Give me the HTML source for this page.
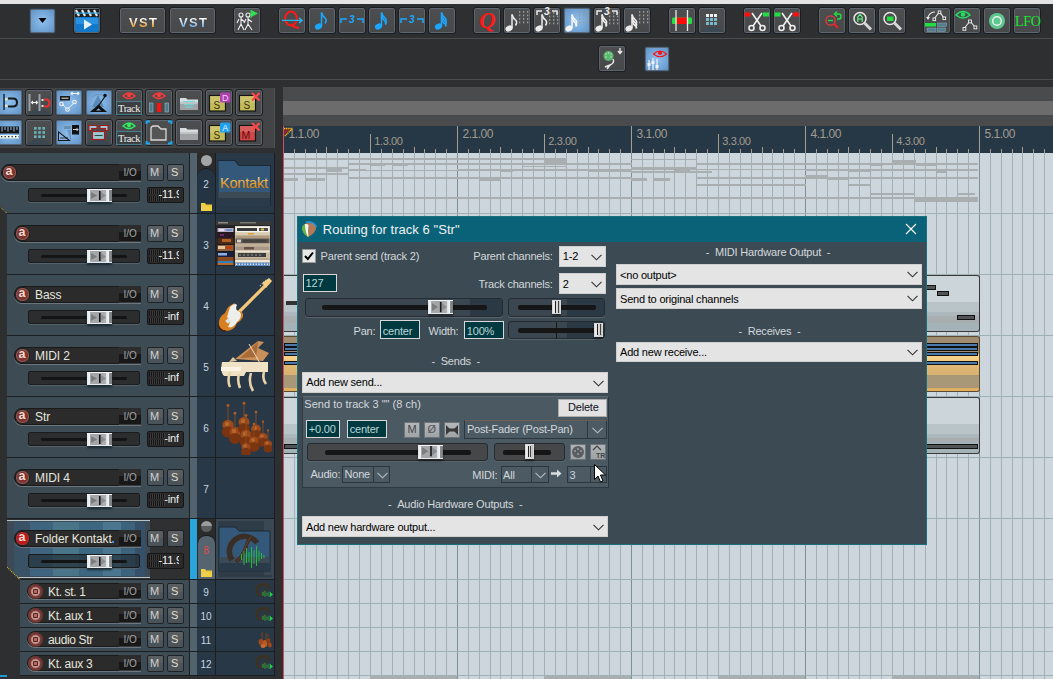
<!DOCTYPE html><html><head><meta charset="utf-8"><style>
*{box-sizing:border-box;margin:0;padding:0}
html,body{width:1053px;height:679px;overflow:hidden;background:#2e2f31;font-family:"Liberation Sans",sans-serif;position:relative}
div,span,svg{position:absolute}
.tb{width:28px;height:27px;border-radius:3px;background:linear-gradient(#4d4e50,#47484a);border:1px solid #1c1d1f;box-shadow:inset 0 0 0 1px #5d6670}
.tb.on{background:radial-gradient(circle at 50% 50%,#8fc0ee 0,#78aadb 45%,#5d8fc0 100%);border-color:#2a3a4a}
.tbs{width:27px;height:27px;border-radius:3px;background:linear-gradient(#4d4e50,#47484a);border:1px solid #1c1d1f;box-shadow:inset 0 0 0 1px #5d6670}
.tbs.on{background:radial-gradient(circle at 50% 50%,#8fc0ee 0,#78aadb 45%,#5d8fc0 100%);border-color:#2a3a4a}
.t{white-space:nowrap;line-height:1}
</style></head><body>
<div style="left:0;top:0;width:1053px;height:4px;background:#e4e4e4"></div>
<div style="left:0;top:38px;width:1053px;height:1px;background:#4a4b4d"></div>
<div style="left:0;top:79px;width:1053px;height:1px;background:#4a4b4d"></div>
<div class="tb on" style="left:29px;top:8px;width:27px;height:26px"></div>
<svg style="left:29px;top:8px" width="27" height="26" viewBox="0 0 27 26"><path d="M9.5 10 H17.5 L13.5 15Z" fill="#000"/></svg>
<div class="tb" style="left:73px;top:7px;width:28px;height:27px"></div>
<svg style="left:73px;top:7px" width="28" height="27" viewBox="0 0 28 27"><rect x="2" y="2" width="24" height="8" fill="#202020"/><path d="M3 3 l3 6 M9 3 l3 6 M15 3 l3 6 M21 3 l3 6" stroke="#e8e8e8" stroke-width="2.2"/><rect x="2" y="5.5" width="24" height="1.2" fill="#3ab0f0"/><rect x="2" y="10" width="24" height="15" rx="2" fill="#1478c8"/><rect x="3" y="11" width="22" height="6" fill="#2a90e0"/><path d="M11 12.5 L19 17.5 L11 22.5Z" fill="#e6f2fa"/></svg>
<div class="tb" style="left:119px;top:7px;width:47px;height:27px"></div>
<span class="t" style="left:129px;top:16px;font-size:13px;font-weight:bold;letter-spacing:1.3px;background:linear-gradient(#ffffff 20%,#e8a040 80%);-webkit-background-clip:text;color:transparent">VST</span>
<div class="tb" style="left:169px;top:7px;width:47px;height:27px"></div>
<span class="t" style="left:179px;top:16px;font-size:13px;font-weight:bold;letter-spacing:1.3px;background:linear-gradient(#ffffff 20%,#78b0e0 80%);-webkit-background-clip:text;color:transparent">VST</span>
<div class="tb" style="left:233px;top:7px;width:28px;height:27px"></div>
<svg style="left:233px;top:7px" width="28" height="27" viewBox="0 0 28 27"><g fill="none" stroke="#f0f0f0" stroke-width="1.1"><circle cx="8" cy="8" r="2"/><circle cx="15" cy="8" r="2"/><path d="M8 10 V17 L5 23 M8 17 L11 23 M6 12 L4 16 M8 12 L12 15 M15 10 V17 L12 23 M15 17 L19 23 M15 12 L19 15 M13 12 L11 16"/></g><path d="M18 3 L25 6.5 L18 10Z" fill="#30e050"/><path d="M18 3 V11" stroke="#30e050" stroke-width="1"/></svg>
<div class="tb" style="left:278px;top:7px"></div>
<div class="tb" style="left:308px;top:7px"></div>
<div class="tb" style="left:338px;top:7px"></div>
<div class="tb" style="left:368px;top:7px"></div>
<div class="tb" style="left:398px;top:7px"></div>
<div class="tb" style="left:428px;top:7px"></div>
<svg style="left:278px;top:7px" width="28" height="27" viewBox="0 0 28 27"><ellipse cx="13" cy="11.5" rx="5.8" ry="7" fill="none" stroke="#ff1818" stroke-width="2"/><path d="M13 17 Q17 21 21 21" fill="none" stroke="#ff1818" stroke-width="2.2"/><path d="M4 13.4 H24 M21 11 L24 13.4 L21 16" fill="none" stroke="#20b8f0" stroke-width="1.4"/></svg>
<svg style="left:308px;top:7px" width="28" height="27" viewBox="0 0 28 27"><ellipse cx="10.5" cy="19.5" rx="3.7" ry="2.8" transform="rotate(-25 10.5 19.5)" fill="#1aa8ff"/><path d="M13.5 19.0 V5.5" stroke="#1aa8ff" stroke-width="1.5"/><path d="M13.5 5.5 Q14.5 9.5 17.5 11.5 Q19.0 13.5 17.0 16.5" fill="none" stroke="#1aa8ff" stroke-width="1.5"/></svg>
<svg style="left:338px;top:7px" width="28" height="27" viewBox="0 0 28 27"><path d="M3 16 V12 H9 M19 12 H25 V16" fill="none" stroke="#1aa8ff" stroke-width="1.5"/><text x="11" y="16" font-family="Liberation Sans" font-weight="bold" font-style="italic" font-size="10" fill="#1aa8ff">3</text></svg>
<svg style="left:368px;top:7px" width="28" height="27" viewBox="0 0 28 27"><ellipse cx="10.5" cy="19.5" rx="3.7" ry="2.8" transform="rotate(-25 10.5 19.5)" fill="#1aa8ff"/><path d="M13.5 19.0 V5.5" stroke="#1aa8ff" stroke-width="1.5"/><path d="M13.5 5.5 Q14.5 9.5 17.5 11.5 Q19.0 13.5 17.0 16.5" fill="none" stroke="#1aa8ff" stroke-width="1.5"/><path d="M13.5 8.5 Q14.5 12.5 17.5 14.5 Q19.0 16.5 17.0 17.5" fill="none" stroke="#1aa8ff" stroke-width="1.5"/></svg>
<svg style="left:398px;top:7px" width="28" height="27" viewBox="0 0 28 27"><path d="M3 16 V12 H9 M19 12 H25 V16" fill="none" stroke="#1aa8ff" stroke-width="1.5"/><text x="11" y="16" font-family="Liberation Sans" font-weight="bold" font-style="italic" font-size="10" fill="#1aa8ff">3</text></svg>
<svg style="left:428px;top:7px" width="28" height="27" viewBox="0 0 28 27"><ellipse cx="10.5" cy="19.5" rx="3.7" ry="2.8" transform="rotate(-25 10.5 19.5)" fill="#1aa8ff"/><path d="M13.5 19.0 V5.5" stroke="#1aa8ff" stroke-width="1.5"/><path d="M13.5 5.5 Q14.5 9.5 17.5 11.5 Q19.0 13.5 17.0 16.5" fill="none" stroke="#1aa8ff" stroke-width="1.5"/><path d="M13.5 8.5 Q14.5 12.5 17.5 14.5 Q19.0 16.5 17.0 17.5" fill="none" stroke="#1aa8ff" stroke-width="1.5"/><path d="M13.5 11.5 Q14.5 15.5 17.5 17.5 Q19.0 19.5 17.0 18.5" fill="none" stroke="#1aa8ff" stroke-width="1.5"/></svg>
<div class="tb" style="left:473px;top:7px"></div>
<div class="tb" style="left:503px;top:7px"></div>
<div class="tb" style="left:533px;top:7px"></div>
<div class="tb on" style="left:563px;top:7px"></div>
<div class="tb" style="left:593px;top:7px"></div>
<div class="tb" style="left:623px;top:7px"></div>
<span class="t" style="left:479px;top:9px;font-family:'Liberation Serif';font-size:23px;font-weight:bold;font-style:italic;color:#ff1a1a">Q</span>
<svg style="left:503px;top:7px" width="28" height="27" viewBox="0 0 28 27"><ellipse cx="6" cy="21.5" rx="3.7" ry="2.8" transform="rotate(-25 6 21.5)" fill="#ececec"/><path d="M9 21.0 V7.5" stroke="#ececec" stroke-width="1.5"/><path d="M9 7.5 Q10 11.5 13 13.5 Q14.5 15.5 12.5 18.5" fill="none" stroke="#ececec" stroke-width="1.5"/><rect x="16" y="4.0" width="1.3" height="1.8" fill="#9a9a9a"/><rect x="16" y="7.5" width="1.3" height="1.8" fill="#9a9a9a"/><rect x="16" y="11.0" width="1.3" height="1.8" fill="#9a9a9a"/><rect x="16" y="14.5" width="1.3" height="1.8" fill="#9a9a9a"/><rect x="20" y="4.0" width="1.3" height="1.8" fill="#9a9a9a"/><rect x="20" y="7.5" width="1.3" height="1.8" fill="#9a9a9a"/><rect x="20" y="11.0" width="1.3" height="1.8" fill="#9a9a9a"/><rect x="20" y="14.5" width="1.3" height="1.8" fill="#9a9a9a"/><rect x="24" y="4.0" width="1.3" height="1.8" fill="#9a9a9a"/><rect x="24" y="7.5" width="1.3" height="1.8" fill="#9a9a9a"/><rect x="24" y="11.0" width="1.3" height="1.8" fill="#9a9a9a"/><rect x="24" y="14.5" width="1.3" height="1.8" fill="#9a9a9a"/></svg>
<svg style="left:533px;top:7px" width="28" height="27" viewBox="0 0 28 27"><ellipse cx="6" cy="21.5" rx="3.7" ry="2.8" transform="rotate(-25 6 21.5)" fill="#ececec"/><path d="M9 21.0 V7.5" stroke="#ececec" stroke-width="1.5"/><path d="M9 7.5 Q10 11.5 13 13.5 Q14.5 15.5 12.5 18.5" fill="none" stroke="#ececec" stroke-width="1.5"/><rect x="16" y="5.0" width="1.3" height="1.8" fill="#9a9a9a"/><rect x="16" y="8.5" width="1.3" height="1.8" fill="#9a9a9a"/><rect x="16" y="12.0" width="1.3" height="1.8" fill="#9a9a9a"/><rect x="16" y="15.5" width="1.3" height="1.8" fill="#9a9a9a"/><rect x="20" y="5.0" width="1.3" height="1.8" fill="#9a9a9a"/><rect x="20" y="8.5" width="1.3" height="1.8" fill="#9a9a9a"/><rect x="20" y="12.0" width="1.3" height="1.8" fill="#9a9a9a"/><rect x="20" y="15.5" width="1.3" height="1.8" fill="#9a9a9a"/><rect x="24" y="5.0" width="1.3" height="1.8" fill="#9a9a9a"/><rect x="24" y="8.5" width="1.3" height="1.8" fill="#9a9a9a"/><rect x="24" y="12.0" width="1.3" height="1.8" fill="#9a9a9a"/><rect x="24" y="15.5" width="1.3" height="1.8" fill="#9a9a9a"/><path d="M4 8 V4 H9 M19 4 H24 V8" fill="none" stroke="#ececec" stroke-width="1.5"/><text x="11" y="8" font-family="Liberation Sans" font-weight="bold" font-style="italic" font-size="10" fill="#ececec">3</text></svg>
<svg style="left:563px;top:7px" width="28" height="27" viewBox="0 0 28 27"><ellipse cx="6" cy="21.5" rx="3.7" ry="2.8" transform="rotate(-25 6 21.5)" fill="#f4f4f4"/><path d="M9 21.0 V7.5" stroke="#f4f4f4" stroke-width="1.5"/><path d="M9 7.5 Q10 11.5 13 13.5 Q14.5 15.5 12.5 18.5" fill="none" stroke="#f4f4f4" stroke-width="1.5"/><path d="M9 10.5 Q10 14.5 13 16.5 Q14.5 18.5 12.5 19.5" fill="none" stroke="#f4f4f4" stroke-width="1.5"/><rect x="16" y="4.0" width="1.3" height="1.8" fill="#9a9a9a"/><rect x="16" y="7.5" width="1.3" height="1.8" fill="#9a9a9a"/><rect x="16" y="11.0" width="1.3" height="1.8" fill="#9a9a9a"/><rect x="16" y="14.5" width="1.3" height="1.8" fill="#9a9a9a"/><rect x="20" y="4.0" width="1.3" height="1.8" fill="#9a9a9a"/><rect x="20" y="7.5" width="1.3" height="1.8" fill="#9a9a9a"/><rect x="20" y="11.0" width="1.3" height="1.8" fill="#9a9a9a"/><rect x="20" y="14.5" width="1.3" height="1.8" fill="#9a9a9a"/><rect x="24" y="4.0" width="1.3" height="1.8" fill="#9a9a9a"/><rect x="24" y="7.5" width="1.3" height="1.8" fill="#9a9a9a"/><rect x="24" y="11.0" width="1.3" height="1.8" fill="#9a9a9a"/><rect x="24" y="14.5" width="1.3" height="1.8" fill="#9a9a9a"/></svg>
<svg style="left:593px;top:7px" width="28" height="27" viewBox="0 0 28 27"><ellipse cx="6" cy="21.5" rx="3.7" ry="2.8" transform="rotate(-25 6 21.5)" fill="#ececec"/><path d="M9 21.0 V7.5" stroke="#ececec" stroke-width="1.5"/><path d="M9 7.5 Q10 11.5 13 13.5 Q14.5 15.5 12.5 18.5" fill="none" stroke="#ececec" stroke-width="1.5"/><path d="M9 10.5 Q10 14.5 13 16.5 Q14.5 18.5 12.5 19.5" fill="none" stroke="#ececec" stroke-width="1.5"/><rect x="16" y="5.0" width="1.3" height="1.8" fill="#9a9a9a"/><rect x="16" y="8.5" width="1.3" height="1.8" fill="#9a9a9a"/><rect x="16" y="12.0" width="1.3" height="1.8" fill="#9a9a9a"/><rect x="16" y="15.5" width="1.3" height="1.8" fill="#9a9a9a"/><rect x="20" y="5.0" width="1.3" height="1.8" fill="#9a9a9a"/><rect x="20" y="8.5" width="1.3" height="1.8" fill="#9a9a9a"/><rect x="20" y="12.0" width="1.3" height="1.8" fill="#9a9a9a"/><rect x="20" y="15.5" width="1.3" height="1.8" fill="#9a9a9a"/><rect x="24" y="5.0" width="1.3" height="1.8" fill="#9a9a9a"/><rect x="24" y="8.5" width="1.3" height="1.8" fill="#9a9a9a"/><rect x="24" y="12.0" width="1.3" height="1.8" fill="#9a9a9a"/><rect x="24" y="15.5" width="1.3" height="1.8" fill="#9a9a9a"/><path d="M4 8 V4 H9 M19 4 H24 V8" fill="none" stroke="#ececec" stroke-width="1.5"/><text x="11" y="8" font-family="Liberation Sans" font-weight="bold" font-style="italic" font-size="10" fill="#ececec">3</text></svg>
<svg style="left:623px;top:7px" width="28" height="27" viewBox="0 0 28 27"><ellipse cx="6" cy="21.5" rx="3.7" ry="2.8" transform="rotate(-25 6 21.5)" fill="#ececec"/><path d="M9 21.0 V7.5" stroke="#ececec" stroke-width="1.5"/><path d="M9 7.5 Q10 11.5 13 13.5 Q14.5 15.5 12.5 18.5" fill="none" stroke="#ececec" stroke-width="1.5"/><path d="M9 10.5 Q10 14.5 13 16.5 Q14.5 18.5 12.5 19.5" fill="none" stroke="#ececec" stroke-width="1.5"/><path d="M9 13.5 Q10 17.5 13 19.5 Q14.5 21.5 12.5 20.5" fill="none" stroke="#ececec" stroke-width="1.5"/><rect x="16" y="4.0" width="1.3" height="1.8" fill="#9a9a9a"/><rect x="16" y="7.5" width="1.3" height="1.8" fill="#9a9a9a"/><rect x="16" y="11.0" width="1.3" height="1.8" fill="#9a9a9a"/><rect x="16" y="14.5" width="1.3" height="1.8" fill="#9a9a9a"/><rect x="20" y="4.0" width="1.3" height="1.8" fill="#9a9a9a"/><rect x="20" y="7.5" width="1.3" height="1.8" fill="#9a9a9a"/><rect x="20" y="11.0" width="1.3" height="1.8" fill="#9a9a9a"/><rect x="20" y="14.5" width="1.3" height="1.8" fill="#9a9a9a"/><rect x="24" y="4.0" width="1.3" height="1.8" fill="#9a9a9a"/><rect x="24" y="7.5" width="1.3" height="1.8" fill="#9a9a9a"/><rect x="24" y="11.0" width="1.3" height="1.8" fill="#9a9a9a"/><rect x="24" y="14.5" width="1.3" height="1.8" fill="#9a9a9a"/></svg>
<div class="tb" style="left:668px;top:7px"></div>
<div class="tb" style="left:698px;top:7px"></div>
<svg style="left:668px;top:7px" width="28" height="27" viewBox="0 0 28 27"><rect x="4" y="10.5" width="20" height="6.5" rx="1" fill="#20e040"/><rect x="8.5" y="10.5" width="10.5" height="6.5" fill="#ff0a0a"/><path d="M8 3 V24 M19.5 3 V24" stroke="#e8e8e8" stroke-width="1.3"/></svg>
<svg style="left:698px;top:7px" width="28" height="27" viewBox="0 0 28 27"><path d="M3 25 Q14 14 25 25Z" fill="#3a4a55"/><rect x="8" y="7" width="3" height="3" fill="#f0f0f0"/><rect x="8" y="11" width="3" height="3" fill="#78b8c8"/><rect x="8" y="15" width="3" height="3" fill="#78b8c8"/><rect x="12" y="7" width="3" height="3" fill="#f0f0f0"/><rect x="12" y="11" width="3" height="3" fill="#78b8c8"/><rect x="12" y="15" width="3" height="3" fill="#78b8c8"/><rect x="16" y="7" width="3" height="3" fill="#f0f0f0"/><rect x="16" y="11" width="3" height="3" fill="#78b8c8"/><rect x="16" y="15" width="3" height="3" fill="#78b8c8"/></svg>
<div class="tb" style="left:743px;top:7px"></div>
<div class="tb" style="left:773px;top:7px"></div>
<svg style="left:743px;top:7px" width="28" height="27" viewBox="0 0 28 27"><rect x="1.5" y="5.5" width="6" height="4" fill="#ff1010"/><rect x="20" y="5.5" width="6" height="4" fill="#20e040"/><g fill="none" stroke="#f0f0f0" stroke-width="1.6"><path d="M9 6 L18 19 M19 6 L10 19"/><circle cx="8.5" cy="21" r="2.5"/><circle cx="19.5" cy="21" r="2.5"/></g></svg>
<svg style="left:773px;top:7px" width="28" height="27" viewBox="0 0 28 27"><rect x="1.5" y="5.5" width="6" height="4" fill="#20e040"/><rect x="20" y="5.5" width="6" height="4" fill="#ff1010"/><g fill="none" stroke="#f0f0f0" stroke-width="1.6"><path d="M9 6 L18 19 M19 6 L10 19"/><circle cx="8.5" cy="21" r="2.5"/><circle cx="19.5" cy="21" r="2.5"/></g></svg>
<div class="tb" style="left:818px;top:7px"></div>
<div class="tb" style="left:848px;top:7px"></div>
<div class="tb" style="left:878px;top:7px"></div>
<svg style="left:818px;top:7px" width="28" height="27" viewBox="0 0 28 27"><circle cx="12.5" cy="13.5" r="4.6" fill="none" stroke="#ee3838" stroke-width="1.3"/><path d="M10 13.5 H15" stroke="#20e040" stroke-width="1.3"/><path d="M16 17 L20 21" stroke="#ee2020" stroke-width="2.2"/><path d="M17 7 H21 Q23 7 23 9.5 Q23 12 21 12 H19" fill="none" stroke="#20e040" stroke-width="1.4"/><path d="M19 4.5 L16.5 7 L19 9.5" fill="none" stroke="#20e040" stroke-width="1.4"/></svg>
<svg style="left:848px;top:7px" width="28" height="27" viewBox="0 0 28 27"><circle cx="12" cy="11.5" r="6" fill="none" stroke="#e8e8e8" stroke-width="1.5"/><path d="M16.5 16 L23 22.5" stroke="#d8d8d8" stroke-width="3"/><path d="M9.8 15 V10 L12 7.5 L14.2 10 V15 M9.8 12 H14.2" fill="none" stroke="#60ff80" stroke-width="1.1"/></svg>
<svg style="left:878px;top:7px" width="28" height="27" viewBox="0 0 28 27"><circle cx="12" cy="11.5" r="6" fill="none" stroke="#e8e8e8" stroke-width="1.5"/><path d="M16.5 16 L23 22.5" stroke="#d8d8d8" stroke-width="3"/><rect x="9" y="9.5" width="6.5" height="4.5" fill="#20e040"/></svg>
<div class="tb" style="left:923px;top:7px"></div>
<div class="tb" style="left:953px;top:7px"></div>
<div class="tb" style="left:983px;top:7px"></div>
<div class="tb" style="left:1013px;top:7px"></div>
<svg style="left:923px;top:7px" width="28" height="27" viewBox="0 0 28 27"><path d="M12 5 Q7 5 5 10" fill="none" stroke="#e8e8e8" stroke-width="1.2"/><path d="M3 10 L5 13 L7 10" fill="#e8e8e8"/><path d="M11 12 L16.5 5 L21 11" stroke="#e8e8e8" stroke-width="1.1" fill="none"/><rect x="10" y="11" width="2.6" height="2.6" fill="#3a3b3d" stroke="#e8e8e8"/><rect x="15.2" y="4" width="2.6" height="2.6" fill="#3a3b3d" stroke="#e8e8e8"/><rect x="20" y="10" width="2.6" height="2.6" fill="#3a3b3d" stroke="#e8e8e8"/><rect x="2" y="16" width="11" height="3.5" fill="#20e040"/><rect x="14.5" y="16" width="9" height="3.5" fill="#4e8090" stroke="#9ab" stroke-width=".5"/><rect x="4" y="21" width="9" height="3.5" fill="#4e8090" stroke="#9ab" stroke-width=".5"/><rect x="14.5" y="21" width="8" height="3.5" fill="#4e8090" stroke="#9ab" stroke-width=".5"/></svg>
<svg style="left:953px;top:7px" width="28" height="27" viewBox="0 0 28 27"><path d="M3 8 Q10 1 17 8 Q10 14 3 8Z" fill="none" stroke="#20e060" stroke-width="1.4"/><circle cx="10" cy="7.5" r="2.2" fill="#20e060"/><path d="M11.5 21 L17 14 L22 20" stroke="#e8e8e8" stroke-width="1.1" fill="none"/><rect x="10" y="20.5" width="2.8" height="2.8" fill="#3a3b3d" stroke="#e8e8e8"/><rect x="15.6" y="13" width="2.8" height="2.8" fill="#3a3b3d" stroke="#e8e8e8"/><rect x="21" y="19" width="2.8" height="2.8" fill="#3a3b3d" stroke="#e8e8e8"/></svg>
<svg style="left:983px;top:7px" width="28" height="27" viewBox="0 0 28 27"><circle cx="14" cy="14" r="8" fill="#5cc890"/><circle cx="14" cy="14" r="4.3" fill="none" stroke="#e8f0ea" stroke-width="1.5"/></svg>
<span class="t" style="left:1015px;top:15px;font-family:'Liberation Serif';font-size:14px;color:#18e830;letter-spacing:-0.3px">LFO</span>
<div class="tb" style="left:598px;top:45px;width:28px;height:27px"></div>
<svg style="left:598px;top:45px" width="28" height="27" viewBox="0 0 28 27"><circle cx="10.5" cy="11" r="5" fill="#5cb870"/><g fill="#c8ecd0"><circle cx="8" cy="9" r=".7"/><circle cx="10.5" cy="8" r=".7"/><circle cx="13" cy="9" r=".7"/><circle cx="8" cy="12" r=".7"/><circle cx="13" cy="12" r=".7"/></g><path d="M15 14 Q17 18 12 20 L7 22 M12 20 L9 24" fill="none" stroke="#e8e8e8" stroke-width="1.5"/><path d="M22 3 V8 M20 6 L22 8.5 L24 6" fill="none" stroke="#f0f0f0" stroke-width="1.3"/></svg>
<div class="tb on" style="left:644px;top:46px;width:26px;height:26px"></div>
<svg style="left:644px;top:46px" width="26" height="26" viewBox="0 0 26 26"><path d="M9.5 8 Q16 2 22.5 8 Q16 13.5 9.5 8Z" fill="none" stroke="#ff1010" stroke-width="1.1"/><circle cx="16" cy="7" r="2" fill="#ff1010"/><path d="M5 14 V24 M9 12 V24 M13 13 V24" stroke="#eef2f4" stroke-width="1.2"/><rect x="3.5" y="17" width="3" height="3" fill="#eef2f4"/><rect x="7.5" y="15" width="3" height="3" fill="#eef2f4"/><rect x="11.5" y="19" width="3" height="3" fill="#eef2f4"/></svg>
<div style="left:0;top:88px;width:275px;height:60px;background:#434446;border-right:1px solid #515254"></div>
<div class="tbs on" style="left:-5px;top:89px;width:28px;height:27px"></div>
<div class="tbs" style="left:25px;top:89px;width:28px;height:27px"></div>
<div class="tbs on" style="left:55px;top:89px;width:28px;height:27px"></div>
<div class="tbs on" style="left:85px;top:89px;width:28px;height:27px"></div>
<div class="tbs" style="left:115px;top:89px;width:28px;height:27px"></div>
<div class="tbs" style="left:145px;top:89px;width:28px;height:27px"></div>
<div class="tbs" style="left:175px;top:89px;width:28px;height:27px"></div>
<div class="tbs" style="left:205px;top:89px;width:28px;height:27px"></div>
<div class="tbs" style="left:235px;top:89px;width:28px;height:27px"></div>
<div class="tbs on" style="left:-5px;top:119px;width:28px;height:27px"></div>
<div class="tbs" style="left:25px;top:119px;width:28px;height:27px"></div>
<div class="tbs on" style="left:55px;top:119px;width:28px;height:27px"></div>
<div class="tbs" style="left:85px;top:119px;width:28px;height:27px"></div>
<div class="tbs" style="left:115px;top:119px;width:28px;height:27px"></div>
<div class="tbs" style="left:145px;top:119px;width:28px;height:27px"></div>
<div class="tbs" style="left:175px;top:119px;width:28px;height:27px"></div>
<div class="tbs" style="left:205px;top:119px;width:28px;height:27px"></div>
<div class="tbs" style="left:235px;top:119px;width:28px;height:27px"></div>
<svg style="left:0px;top:89px" width="22" height="27" viewBox="0 0 22 27"><rect x="3" y="5" width="2" height="16" fill="#2a4a68"/><rect x="5" y="9" width="2.5" height="2.5" fill="#e8e0c0"/><rect x="5" y="15.5" width="2.5" height="2.5" fill="#e8e0c0"/><path d="M8 9.5 H13 Q17 9.5 17 13.5 Q17 17.5 13 17.5 H8" fill="none" stroke="#1a1a1a" stroke-width="2"/></svg>
<svg style="left:25px;top:89px" width="28" height="27" viewBox="0 0 28 27"><path d="M2 26 Q14 14 26 26Z" fill="#3a4650"/><rect x="3.5" y="5" width="2" height="17" fill="#9aa2a8"/><rect x="13.5" y="5" width="2" height="17" fill="#9aa2a8"/><path d="M6.5 13.5 H12.5 M8 12 L6.5 13.5 L8 15 M11 12 L12.5 13.5 L11 15" fill="none" stroke="#f0f0f0" stroke-width="1.1"/><rect x="16.5" y="10" width="2" height="2" fill="#e0e0e0"/><rect x="16.5" y="16" width="2" height="2" fill="#e0e0e0"/><path d="M19 10.5 H21 Q24.5 10.5 24.5 14 Q24.5 17.5 21 17.5 H19" fill="none" stroke="#e83030" stroke-width="2"/></svg>
<svg style="left:55px;top:89px" width="28" height="27" viewBox="0 0 28 27"><rect x="5" y="7" width="10" height="4.5" fill="#1a1a1a"/><path d="M6.5 9.2 H13.5" stroke="#e8e8e8" stroke-width="1"/><path d="M16 4.5 H24 M17.5 3 L16 4.5 L17.5 6 M22.5 3 L24 4.5 L22.5 6" fill="none" stroke="#f0f0f0" stroke-width="1.1"/><path d="M7 15 L12.5 20 L19.5 13.5" stroke="#f0f0f0" stroke-width="1" fill="none"/><g fill="none" stroke="#f0f0f0" stroke-width="1.1"><circle cx="6.5" cy="15" r="1.8"/><circle cx="12.5" cy="20.5" r="1.8"/><circle cx="19.5" cy="13" r="1.8"/></g></svg>
<svg style="left:85px;top:89px" width="28" height="27" viewBox="0 0 28 27"><path d="M7 8 Q13 3 20 7" fill="none" stroke="#6a90b0" stroke-width=".8"/><path d="M13 6 L19 18 H7Z" fill="#5a88b8"/><path d="M5 23 L13.5 15.5 L22 23Z" fill="#111"/><path d="M11 21.5 L13.5 19.5 L16 21.5Z" fill="#8ab8e8"/><path d="M12 19 L21 6" stroke="#111" stroke-width="1.2"/><circle cx="20" cy="6.5" r="1.7" fill="#111"/></svg>
<svg style="left:115px;top:89px" width="28" height="27" viewBox="0 0 28 27"><path d="M8 7 Q14 1 20 7 Q14 12 8 7Z" fill="none" stroke="#ff3a3a" stroke-width="1.3"/><circle cx="14" cy="6.2" r="2" fill="#ff3a3a"/><rect x="1.5" y="12.5" width="25" height="13" fill="#3c3d3f" stroke="#4a7a8a" stroke-width="1.2"/><text x="3" y="23" font-family="Liberation Serif" font-size="10.5" fill="#f0f0f0" letter-spacing="-0.4">Track</text></svg>
<svg style="left:145px;top:89px" width="28" height="27" viewBox="0 0 28 27"><path d="M8 7 Q14 1 20 7 Q14 12 8 7Z" fill="none" stroke="#ff3a3a" stroke-width="1.3"/><circle cx="14" cy="6.2" r="2" fill="#ff3a3a"/><rect x="4.5" y="14" width="3.5" height="9" fill="#4e7c8c" stroke="#9ab8c0" stroke-width=".6"/><rect x="12" y="14" width="4" height="9" fill="#ff1010"/><rect x="20" y="14" width="3.5" height="9" fill="#4e7c8c" stroke="#9ab8c0" stroke-width=".6"/></svg>
<svg style="left:175px;top:89px" width="28" height="27" viewBox="0 0 28 27"><path d="M5 9 H11 L12.5 10.5 H23 V21 H5Z" fill="#d8dcdc"/><rect x="5" y="14.5" width="18" height="6.5" fill="#a0a4a6"/><rect x="5" y="13" width="18" height="1.5" fill="#c0c4c6"/><path d="M8 12.5 H20 M9 15.5 H19 M10 18 H18" stroke="#60e0e0" stroke-width=".9"/></svg>
<svg style="left:205px;top:89px" width="28" height="27" viewBox="0 0 28 27"><rect x="4.5" y="6.5" width="16" height="15.5" fill="#c4bc58" stroke="#141414" stroke-width="1.2"/><rect x="5" y="7" width="15" height="7" fill="#d4cc80" opacity=".5"/><text x="8.5" y="19.5" font-family="Liberation Sans" font-size="10" fill="#3a3010">S</text><rect x="15" y="3.5" width="10.5" height="10" rx="1.5" fill="#b040b0"/><text x="17" y="12" font-family="Liberation Sans" font-size="9" fill="#f0d0f0">D</text></svg>
<svg style="left:235px;top:89px" width="28" height="27" viewBox="0 0 28 27"><rect x="4.5" y="6.5" width="16" height="15.5" fill="#c4bc58" stroke="#141414" stroke-width="1.2"/><rect x="5" y="7" width="15" height="7" fill="#d4cc80" opacity=".5"/><text x="8.5" y="19.5" font-family="Liberation Sans" font-size="10" fill="#3a3010">S</text><path d="M17 4 L24.5 11.5 M24.5 4 L17 11.5" stroke="#ff4848" stroke-width="2.2"/></svg>
<svg style="left:0px;top:119px" width="22" height="27" viewBox="0 0 22 27"><rect x="0" y="7.5" width="19" height="7" fill="#161616"/><path d="M2 8 V12.5 M5 8 V11 M8 8 V12.5 M11 8 V11 M14 8 V12.5 M17 8 V11" stroke="#9cc4e8" stroke-width="1"/><rect x="0" y="16" width="19" height="3.5" fill="#eef4f0"/><path d="M1 17.7 H19" stroke="#222" stroke-width="1.2" stroke-dasharray="1.3 2.2"/></svg>
<svg style="left:25px;top:119px" width="28" height="27" viewBox="0 0 28 27"><path d="M2 26 Q14 14 26 26Z" fill="#3a4650"/><rect x="9.0" y="8.0" width="2.6" height="2.6" fill="#68b4b8"/><rect x="9.0" y="12.2" width="2.6" height="2.6" fill="#68b4b8"/><rect x="9.0" y="16.4" width="2.6" height="2.6" fill="#68b4b8"/><rect x="13.2" y="8.0" width="2.6" height="2.6" fill="#68b4b8"/><rect x="13.2" y="12.2" width="2.6" height="2.6" fill="#68b4b8"/><rect x="13.2" y="16.4" width="2.6" height="2.6" fill="#68b4b8"/><rect x="17.4" y="8.0" width="2.6" height="2.6" fill="#68b4b8"/><rect x="17.4" y="12.2" width="2.6" height="2.6" fill="#68b4b8"/><rect x="17.4" y="16.4" width="2.6" height="2.6" fill="#68b4b8"/></svg>
<svg style="left:55px;top:119px" width="28" height="27" viewBox="0 0 28 27"><path d="M3 12 L16 22 H3Z" fill="#111"/><path d="M4 14 L13 21 H4Z" fill="#8ab8e8"/><path d="M5 19 H13" stroke="#111" stroke-width=".8"/><rect x="9" y="7" width="7" height="3" fill="#6a90b0"/><rect x="17" y="6" width="7" height="9.5" fill="#111"/><path d="M18 10.5 H23 M21.5 9 L23 10.5 L21.5 12" fill="none" stroke="#e8e8e8" stroke-width=".9"/><path d="M12 11 L16 11 L16 22" fill="#5a80a8" opacity=".6"/></svg>
<svg style="left:85px;top:119px" width="28" height="27" viewBox="0 0 28 27"><path d="M2 26 Q14 14 26 26Z" fill="#3a4650"/><path d="M4 11.5 V6.5 H12 V9.5 H6.5 V11.5Z" fill="#9ac8d8" stroke="#b01818" stroke-width="1.1"/><path d="M23 11.5 V6.5 H15 V9.5 H20.5 V11.5Z" fill="#9ac8d8" stroke="#b01818" stroke-width="1.1"/><rect x="7.5" y="12.5" width="12" height="8" fill="#9ac8d0" stroke="#b01818" stroke-width="1.1"/><path d="M9.5 16.5 H17.5" stroke="#304850" stroke-width="1"/></svg>
<svg style="left:115px;top:119px" width="28" height="27" viewBox="0 0 28 27"><path d="M8 7 Q14 1 20 7 Q14 12 8 7Z" fill="none" stroke="#30f060" stroke-width="1.3"/><circle cx="14" cy="6.2" r="2" fill="#30f060"/><rect x="1.5" y="12.5" width="25" height="13" fill="#3c3d3f" stroke="#4a7a8a" stroke-width="1.2"/><text x="3" y="23" font-family="Liberation Serif" font-size="10.5" fill="#f0f0f0" letter-spacing="-0.4">Track</text></svg>
<svg style="left:145px;top:119px" width="28" height="27" viewBox="0 0 28 27"><path d="M1.5 5 V2.5 H5 M23 2.5 H26.5 V5 M1.5 22 V24.5 H5 M23 24.5 H26.5 V22" fill="none" stroke="#20a8f0" stroke-width="2"/><path d="M6 21 V10 Q6 7 9 7 H13 L16 10 H21 V21Z" fill="#555" stroke="#d8d8d8" stroke-width="1.3"/></svg>
<svg style="left:175px;top:119px" width="28" height="27" viewBox="0 0 28 27"><path d="M5 9 H11 L12.5 10.5 H23 V21 H5Z" fill="#d8dcdc"/><rect x="5" y="14.5" width="18" height="6.5" fill="#a0a4a6"/><rect x="5" y="13" width="18" height="1.5" fill="#c0c4c6"/></svg>
<svg style="left:205px;top:119px" width="28" height="27" viewBox="0 0 28 27"><rect x="4.5" y="6.5" width="16" height="15.5" fill="#c4bc58" stroke="#141414" stroke-width="1.2"/><rect x="5" y="7" width="15" height="7" fill="#d4cc80" opacity=".5"/><text x="8.5" y="19.5" font-family="Liberation Sans" font-size="10" fill="#3a3010">S</text><rect x="15" y="3.5" width="10.5" height="10" rx="1.5" fill="#20a0f0"/><text x="17.3" y="12" font-family="Liberation Sans" font-size="9" fill="#f0f8ff">A</text></svg>
<svg style="left:235px;top:119px" width="28" height="27" viewBox="0 0 28 27"><rect x="4.5" y="6.5" width="16" height="15.5" fill="#d04848" stroke="#141414" stroke-width="1.2"/><rect x="5" y="7" width="15" height="6" fill="#e07070" opacity=".6"/><text x="6.5" y="19.5" font-family="Liberation Sans" font-size="10.5" fill="#6a0808">M</text><path d="M17 4 L24.5 11.5 M24.5 4 L17 11.5" stroke="#ff4848" stroke-width="2.2"/></svg>
<div style="left:283px;top:87px;width:770px;height:14px;background:#4a4b4d"></div>
<div style="left:283px;top:101px;width:770px;height:14px;background:#6c6c6c"></div>
<div style="left:283px;top:115px;width:770px;height:11px;background:#4a4b4d"></div>
<div style="left:283px;top:126px;width:770px;height:27px;background:#263745"></div>
<div style="left:283px;top:153px;width:770px;height:526px;background:#cdd6dc"></div>
<div style="left:283px;top:153px;width:1px;height:526px;background:#7a8f97"></div>
<div style="left:283px;top:126px;width:1px;height:27px;background:#a89d8c"></div>
<div style="left:294px;top:153px;width:1px;height:526px;background:#9fb1b6"></div>
<div style="left:294px;top:149px;width:1px;height:4px;background:#a89d8c"></div>
<div style="left:305px;top:153px;width:1px;height:526px;background:#9fb1b6"></div>
<div style="left:305px;top:149px;width:1px;height:4px;background:#a89d8c"></div>
<div style="left:316px;top:153px;width:1px;height:526px;background:#9fb1b6"></div>
<div style="left:316px;top:149px;width:1px;height:4px;background:#a89d8c"></div>
<div style="left:326px;top:153px;width:1px;height:526px;background:#9fb1b6"></div>
<div style="left:326px;top:147px;width:1px;height:6px;background:#a89d8c"></div>
<div style="left:337px;top:153px;width:1px;height:526px;background:#9fb1b6"></div>
<div style="left:337px;top:149px;width:1px;height:4px;background:#a89d8c"></div>
<div style="left:348px;top:153px;width:1px;height:526px;background:#9fb1b6"></div>
<div style="left:348px;top:149px;width:1px;height:4px;background:#a89d8c"></div>
<div style="left:359px;top:153px;width:1px;height:526px;background:#9fb1b6"></div>
<div style="left:359px;top:149px;width:1px;height:4px;background:#a89d8c"></div>
<div style="left:370px;top:153px;width:1px;height:526px;background:#9fb1b6"></div>
<div style="left:370px;top:134px;width:1px;height:19px;background:#a89d8c"></div>
<div style="left:381px;top:153px;width:1px;height:526px;background:#9fb1b6"></div>
<div style="left:381px;top:149px;width:1px;height:4px;background:#a89d8c"></div>
<div style="left:392px;top:153px;width:1px;height:526px;background:#9fb1b6"></div>
<div style="left:392px;top:149px;width:1px;height:4px;background:#a89d8c"></div>
<div style="left:403px;top:153px;width:1px;height:526px;background:#9fb1b6"></div>
<div style="left:403px;top:149px;width:1px;height:4px;background:#a89d8c"></div>
<div style="left:414px;top:153px;width:1px;height:526px;background:#9fb1b6"></div>
<div style="left:414px;top:147px;width:1px;height:6px;background:#a89d8c"></div>
<div style="left:424px;top:153px;width:1px;height:526px;background:#9fb1b6"></div>
<div style="left:424px;top:149px;width:1px;height:4px;background:#a89d8c"></div>
<div style="left:435px;top:153px;width:1px;height:526px;background:#9fb1b6"></div>
<div style="left:435px;top:149px;width:1px;height:4px;background:#a89d8c"></div>
<div style="left:446px;top:153px;width:1px;height:526px;background:#9fb1b6"></div>
<div style="left:446px;top:149px;width:1px;height:4px;background:#a89d8c"></div>
<div style="left:457px;top:153px;width:1px;height:526px;background:#7a8f97"></div>
<div style="left:457px;top:126px;width:1px;height:27px;background:#a89d8c"></div>
<div style="left:468px;top:153px;width:1px;height:526px;background:#9fb1b6"></div>
<div style="left:468px;top:149px;width:1px;height:4px;background:#a89d8c"></div>
<div style="left:479px;top:153px;width:1px;height:526px;background:#9fb1b6"></div>
<div style="left:479px;top:149px;width:1px;height:4px;background:#a89d8c"></div>
<div style="left:490px;top:153px;width:1px;height:526px;background:#9fb1b6"></div>
<div style="left:490px;top:149px;width:1px;height:4px;background:#a89d8c"></div>
<div style="left:500px;top:153px;width:1px;height:526px;background:#9fb1b6"></div>
<div style="left:500px;top:147px;width:1px;height:6px;background:#a89d8c"></div>
<div style="left:511px;top:153px;width:1px;height:526px;background:#9fb1b6"></div>
<div style="left:511px;top:149px;width:1px;height:4px;background:#a89d8c"></div>
<div style="left:522px;top:153px;width:1px;height:526px;background:#9fb1b6"></div>
<div style="left:522px;top:149px;width:1px;height:4px;background:#a89d8c"></div>
<div style="left:533px;top:153px;width:1px;height:526px;background:#9fb1b6"></div>
<div style="left:533px;top:149px;width:1px;height:4px;background:#a89d8c"></div>
<div style="left:544px;top:153px;width:1px;height:526px;background:#9fb1b6"></div>
<div style="left:544px;top:134px;width:1px;height:19px;background:#a89d8c"></div>
<div style="left:555px;top:153px;width:1px;height:526px;background:#9fb1b6"></div>
<div style="left:555px;top:149px;width:1px;height:4px;background:#a89d8c"></div>
<div style="left:566px;top:153px;width:1px;height:526px;background:#9fb1b6"></div>
<div style="left:566px;top:149px;width:1px;height:4px;background:#a89d8c"></div>
<div style="left:577px;top:153px;width:1px;height:526px;background:#9fb1b6"></div>
<div style="left:577px;top:149px;width:1px;height:4px;background:#a89d8c"></div>
<div style="left:588px;top:153px;width:1px;height:526px;background:#9fb1b6"></div>
<div style="left:588px;top:147px;width:1px;height:6px;background:#a89d8c"></div>
<div style="left:598px;top:153px;width:1px;height:526px;background:#9fb1b6"></div>
<div style="left:598px;top:149px;width:1px;height:4px;background:#a89d8c"></div>
<div style="left:609px;top:153px;width:1px;height:526px;background:#9fb1b6"></div>
<div style="left:609px;top:149px;width:1px;height:4px;background:#a89d8c"></div>
<div style="left:620px;top:153px;width:1px;height:526px;background:#9fb1b6"></div>
<div style="left:620px;top:149px;width:1px;height:4px;background:#a89d8c"></div>
<div style="left:631px;top:153px;width:1px;height:526px;background:#7a8f97"></div>
<div style="left:631px;top:126px;width:1px;height:27px;background:#a89d8c"></div>
<div style="left:642px;top:153px;width:1px;height:526px;background:#9fb1b6"></div>
<div style="left:642px;top:149px;width:1px;height:4px;background:#a89d8c"></div>
<div style="left:653px;top:153px;width:1px;height:526px;background:#9fb1b6"></div>
<div style="left:653px;top:149px;width:1px;height:4px;background:#a89d8c"></div>
<div style="left:664px;top:153px;width:1px;height:526px;background:#9fb1b6"></div>
<div style="left:664px;top:149px;width:1px;height:4px;background:#a89d8c"></div>
<div style="left:674px;top:153px;width:1px;height:526px;background:#9fb1b6"></div>
<div style="left:674px;top:147px;width:1px;height:6px;background:#a89d8c"></div>
<div style="left:685px;top:153px;width:1px;height:526px;background:#9fb1b6"></div>
<div style="left:685px;top:149px;width:1px;height:4px;background:#a89d8c"></div>
<div style="left:696px;top:153px;width:1px;height:526px;background:#9fb1b6"></div>
<div style="left:696px;top:149px;width:1px;height:4px;background:#a89d8c"></div>
<div style="left:707px;top:153px;width:1px;height:526px;background:#9fb1b6"></div>
<div style="left:707px;top:149px;width:1px;height:4px;background:#a89d8c"></div>
<div style="left:718px;top:153px;width:1px;height:526px;background:#9fb1b6"></div>
<div style="left:718px;top:134px;width:1px;height:19px;background:#a89d8c"></div>
<div style="left:729px;top:153px;width:1px;height:526px;background:#9fb1b6"></div>
<div style="left:729px;top:149px;width:1px;height:4px;background:#a89d8c"></div>
<div style="left:740px;top:153px;width:1px;height:526px;background:#9fb1b6"></div>
<div style="left:740px;top:149px;width:1px;height:4px;background:#a89d8c"></div>
<div style="left:751px;top:153px;width:1px;height:526px;background:#9fb1b6"></div>
<div style="left:751px;top:149px;width:1px;height:4px;background:#a89d8c"></div>
<div style="left:762px;top:153px;width:1px;height:526px;background:#9fb1b6"></div>
<div style="left:762px;top:147px;width:1px;height:6px;background:#a89d8c"></div>
<div style="left:772px;top:153px;width:1px;height:526px;background:#9fb1b6"></div>
<div style="left:772px;top:149px;width:1px;height:4px;background:#a89d8c"></div>
<div style="left:783px;top:153px;width:1px;height:526px;background:#9fb1b6"></div>
<div style="left:783px;top:149px;width:1px;height:4px;background:#a89d8c"></div>
<div style="left:794px;top:153px;width:1px;height:526px;background:#9fb1b6"></div>
<div style="left:794px;top:149px;width:1px;height:4px;background:#a89d8c"></div>
<div style="left:805px;top:153px;width:1px;height:526px;background:#7a8f97"></div>
<div style="left:805px;top:126px;width:1px;height:27px;background:#a89d8c"></div>
<div style="left:816px;top:153px;width:1px;height:526px;background:#9fb1b6"></div>
<div style="left:816px;top:149px;width:1px;height:4px;background:#a89d8c"></div>
<div style="left:827px;top:153px;width:1px;height:526px;background:#9fb1b6"></div>
<div style="left:827px;top:149px;width:1px;height:4px;background:#a89d8c"></div>
<div style="left:838px;top:153px;width:1px;height:526px;background:#9fb1b6"></div>
<div style="left:838px;top:149px;width:1px;height:4px;background:#a89d8c"></div>
<div style="left:848px;top:153px;width:1px;height:526px;background:#9fb1b6"></div>
<div style="left:848px;top:147px;width:1px;height:6px;background:#a89d8c"></div>
<div style="left:859px;top:153px;width:1px;height:526px;background:#9fb1b6"></div>
<div style="left:859px;top:149px;width:1px;height:4px;background:#a89d8c"></div>
<div style="left:870px;top:153px;width:1px;height:526px;background:#9fb1b6"></div>
<div style="left:870px;top:149px;width:1px;height:4px;background:#a89d8c"></div>
<div style="left:881px;top:153px;width:1px;height:526px;background:#9fb1b6"></div>
<div style="left:881px;top:149px;width:1px;height:4px;background:#a89d8c"></div>
<div style="left:892px;top:153px;width:1px;height:526px;background:#9fb1b6"></div>
<div style="left:892px;top:134px;width:1px;height:19px;background:#a89d8c"></div>
<div style="left:903px;top:153px;width:1px;height:526px;background:#9fb1b6"></div>
<div style="left:903px;top:149px;width:1px;height:4px;background:#a89d8c"></div>
<div style="left:914px;top:153px;width:1px;height:526px;background:#9fb1b6"></div>
<div style="left:914px;top:149px;width:1px;height:4px;background:#a89d8c"></div>
<div style="left:925px;top:153px;width:1px;height:526px;background:#9fb1b6"></div>
<div style="left:925px;top:149px;width:1px;height:4px;background:#a89d8c"></div>
<div style="left:936px;top:153px;width:1px;height:526px;background:#9fb1b6"></div>
<div style="left:936px;top:147px;width:1px;height:6px;background:#a89d8c"></div>
<div style="left:946px;top:153px;width:1px;height:526px;background:#9fb1b6"></div>
<div style="left:946px;top:149px;width:1px;height:4px;background:#a89d8c"></div>
<div style="left:957px;top:153px;width:1px;height:526px;background:#9fb1b6"></div>
<div style="left:957px;top:149px;width:1px;height:4px;background:#a89d8c"></div>
<div style="left:968px;top:153px;width:1px;height:526px;background:#9fb1b6"></div>
<div style="left:968px;top:149px;width:1px;height:4px;background:#a89d8c"></div>
<div style="left:979px;top:153px;width:1px;height:526px;background:#7a8f97"></div>
<div style="left:979px;top:126px;width:1px;height:27px;background:#a89d8c"></div>
<div style="left:990px;top:153px;width:1px;height:526px;background:#9fb1b6"></div>
<div style="left:990px;top:149px;width:1px;height:4px;background:#a89d8c"></div>
<div style="left:1001px;top:153px;width:1px;height:526px;background:#9fb1b6"></div>
<div style="left:1001px;top:149px;width:1px;height:4px;background:#a89d8c"></div>
<div style="left:1012px;top:153px;width:1px;height:526px;background:#9fb1b6"></div>
<div style="left:1012px;top:149px;width:1px;height:4px;background:#a89d8c"></div>
<div style="left:1022px;top:153px;width:1px;height:526px;background:#9fb1b6"></div>
<div style="left:1022px;top:147px;width:1px;height:6px;background:#a89d8c"></div>
<div style="left:1033px;top:153px;width:1px;height:526px;background:#9fb1b6"></div>
<div style="left:1033px;top:149px;width:1px;height:4px;background:#a89d8c"></div>
<div style="left:1044px;top:153px;width:1px;height:526px;background:#9fb1b6"></div>
<div style="left:1044px;top:149px;width:1px;height:4px;background:#a89d8c"></div>
<span class="t" style="left:288.5px;top:128.4px;font-size:12px;color:#a39c90;letter-spacing:-0.5px">1.1.00</span>
<span class="t" style="left:374.3px;top:135.7px;font-size:11px;color:#a39c90;letter-spacing:-0.4px">1.3.00</span>
<span class="t" style="left:462.5px;top:128.4px;font-size:12px;color:#a39c90;letter-spacing:-0.5px">2.1.00</span>
<span class="t" style="left:548.3px;top:135.7px;font-size:11px;color:#a39c90;letter-spacing:-0.4px">2.3.00</span>
<span class="t" style="left:636.5px;top:128.4px;font-size:12px;color:#a39c90;letter-spacing:-0.5px">3.1.00</span>
<span class="t" style="left:722.3px;top:135.7px;font-size:11px;color:#a39c90;letter-spacing:-0.4px">3.3.00</span>
<span class="t" style="left:810.5px;top:128.4px;font-size:12px;color:#a39c90;letter-spacing:-0.5px">4.1.00</span>
<span class="t" style="left:896.3px;top:135.7px;font-size:11px;color:#a39c90;letter-spacing:-0.4px">4.3.00</span>
<span class="t" style="left:984.5px;top:128.4px;font-size:12px;color:#a39c90;letter-spacing:-0.5px">5.1.00</span>
<div style="left:283px;top:213px;width:770px;height:1px;background:#9fb0b5"></div>
<div style="left:283px;top:274px;width:770px;height:1px;background:#9fb0b5"></div>
<div style="left:283px;top:335px;width:770px;height:1px;background:#9fb0b5"></div>
<div style="left:283px;top:396px;width:770px;height:1px;background:#9fb0b5"></div>
<div style="left:283px;top:457px;width:770px;height:1px;background:#9fb0b5"></div>
<div style="left:283px;top:518px;width:770px;height:1px;background:#9fb0b5"></div>
<div style="left:283px;top:579px;width:770px;height:1px;background:#9fb0b5"></div>
<div style="left:283px;top:603px;width:770px;height:1px;background:#9fb0b5"></div>
<div style="left:283px;top:627px;width:770px;height:1px;background:#9fb0b5"></div>
<div style="left:283px;top:651px;width:770px;height:1px;background:#9fb0b5"></div>
<div style="left:283px;top:675px;width:770px;height:1px;background:#9fb0b5"></div>
<div style="left:370.0px;top:676px;width:87.1px;height:3px;background:#a9aeb1"></div>
<div style="left:544.0px;top:676px;width:87.1px;height:3px;background:#a9aeb1"></div>
<div style="left:718.0px;top:676px;width:87.1px;height:3px;background:#a9aeb1"></div>
<div style="left:892.0px;top:676px;width:87.1px;height:3px;background:#a9aeb1"></div>
<div style="left:283.0px;top:157.7px;width:175.0px;height:2.5px;background:#a9aeb1"></div>
<div style="left:348.6px;top:163.3px;width:109.4px;height:1.5px;background:#a9aeb1"></div>
<div style="left:371.0px;top:164.0px;width:14.0px;height:2.0px;background:#a9aeb1"></div>
<div style="left:393.0px;top:164.0px;width:15.0px;height:2.0px;background:#a9aeb1"></div>
<div style="left:283.0px;top:167.0px;width:65.6px;height:1.5px;background:#a9aeb1"></div>
<div style="left:326.5px;top:168.8px;width:15.5px;height:2.8px;background:#a9aeb1"></div>
<div style="left:348.6px;top:169.3px;width:17.4px;height:1.7px;background:#a9aeb1"></div>
<div style="left:348.6px;top:169.6px;width:109.4px;height:1.2px;background:#a9aeb1"></div>
<div style="left:283.0px;top:173.3px;width:65.6px;height:1.5px;background:#a9aeb1"></div>
<div style="left:348.6px;top:177.0px;width:109.4px;height:1.5px;background:#a9aeb1"></div>
<div style="left:283.0px;top:178.0px;width:15.0px;height:2.8px;background:#a9aeb1"></div>
<div style="left:305.4px;top:178.0px;width:19.6px;height:2.8px;background:#a9aeb1"></div>
<div style="left:283.0px;top:197.0px;width:175.0px;height:1.7px;background:#a9aeb1"></div>
<div style="left:457.0px;top:157.7px;width:87.3px;height:2.0px;background:#a9aeb1"></div>
<div style="left:544.3px;top:157.7px;width:22.7px;height:6.6px;background:#a9aeb1"></div>
<div style="left:457.0px;top:163.3px;width:175.0px;height:1.7px;background:#a9aeb1"></div>
<div style="left:522.6px;top:166.0px;width:44.1px;height:0.8px;background:#a9aeb1"></div>
<div style="left:457.0px;top:168.8px;width:175.0px;height:2.2px;background:#a9aeb1"></div>
<div style="left:501.0px;top:168.8px;width:12.0px;height:3.2px;background:#a9aeb1"></div>
<div style="left:588.0px;top:169.0px;width:44.0px;height:3.0px;background:#a9aeb1"></div>
<div style="left:457.0px;top:177.0px;width:175.0px;height:1.5px;background:#a9aeb1"></div>
<div style="left:479.4px;top:178.0px;width:21.1px;height:2.8px;background:#a9aeb1"></div>
<div style="left:457.0px;top:197.0px;width:175.0px;height:1.7px;background:#a9aeb1"></div>
<div style="left:631.0px;top:158.8px;width:65.6px;height:1.7px;background:#a9aeb1"></div>
<div style="left:696.6px;top:163.3px;width:109.4px;height:1.7px;background:#a9aeb1"></div>
<div style="left:631.0px;top:167.0px;width:65.6px;height:1.8px;background:#a9aeb1"></div>
<div style="left:674.5px;top:167.0px;width:15.5px;height:5.0px;background:#a9aeb1"></div>
<div style="left:631.0px;top:168.8px;width:175.0px;height:1.6px;background:#a9aeb1"></div>
<div style="left:631.0px;top:171.3px;width:65.6px;height:1.3px;background:#a9aeb1"></div>
<div style="left:696.6px;top:171.3px;width:15.0px;height:1.3px;background:#a9aeb1"></div>
<div style="left:696.6px;top:177.0px;width:109.4px;height:1.5px;background:#a9aeb1"></div>
<div style="left:631.0px;top:178.0px;width:15.8px;height:2.8px;background:#a9aeb1"></div>
<div style="left:653.4px;top:178.0px;width:16.6px;height:2.8px;background:#a9aeb1"></div>
<div style="left:696.6px;top:183.7px;width:109.4px;height:2.5px;background:#a9aeb1"></div>
<div style="left:631.0px;top:197.0px;width:175.0px;height:1.7px;background:#a9aeb1"></div>
<div style="left:892.0px;top:159.6px;width:23.5px;height:5.0px;background:#a9aeb1"></div>
<div style="left:805.0px;top:163.3px;width:173.0px;height:1.7px;background:#a9aeb1"></div>
<div style="left:870.6px;top:164.6px;width:12.4px;height:1.7px;background:#a9aeb1"></div>
<div style="left:915.5px;top:164.6px;width:20.0px;height:1.7px;background:#a9aeb1"></div>
<div style="left:805.0px;top:168.8px;width:173.0px;height:2.2px;background:#a9aeb1"></div>
<div style="left:848.5px;top:169.6px;width:22.1px;height:2.4px;background:#a9aeb1"></div>
<div style="left:935.5px;top:171.0px;width:10.5px;height:1.5px;background:#a9aeb1"></div>
<div style="left:805.0px;top:174.6px;width:22.4px;height:3.4px;background:#a9aeb1"></div>
<div style="left:805.0px;top:177.0px;width:173.0px;height:1.5px;background:#a9aeb1"></div>
<div style="left:827.4px;top:178.0px;width:21.1px;height:2.4px;background:#a9aeb1"></div>
<div style="left:848.5px;top:183.7px;width:22.1px;height:2.5px;background:#a9aeb1"></div>
<div style="left:870.6px;top:193.0px;width:44.1px;height:2.4px;background:#a9aeb1"></div>
<div style="left:957.0px;top:193.0px;width:17.5px;height:2.4px;background:#a9aeb1"></div>
<div style="left:805.0px;top:197.0px;width:109.7px;height:1.7px;background:#a9aeb1"></div>
<div style="left:914.7px;top:197.0px;width:63.3px;height:4.5px;background:#a9aeb1"></div>
<div style="left:284px;top:275px;width:696px;height:57px;border:1px solid #3a3a3a;border-left:none;border-radius:0 3px 3px 0;overflow:hidden;background:linear-gradient(#ccd5da 0,#ccd5da 47%,#b8c4c8 47%,#b8c4c8 65%,#acb8bd 65%,#acb8bd 72%,#a8adb0 72%,#a8adb0 86%,#a3b3b8 86%)"><div style="left:641px;top:9px;width:11px;height:5px;background:#505456;border:1px solid #111"></div><div style="left:653px;top:15px;width:12px;height:5px;background:#505456;border:1px solid #111"></div><div style="left:673px;top:39px;width:18px;height:5px;background:#505456;border:1px solid #111"></div><div style="left:2px;top:25px;width:16px;height:4px;background:#333"></div></div>
<div style="left:284px;top:336px;width:696px;height:56px;border:1px solid #5a4a30;border-left:none;border-radius:0 3px 3px 0;overflow:hidden;background:linear-gradient(#a08c70 0,#a08c70 30%,#b89870 30%,#b89870 32%,#f8d48a 32%,#f4cc84 45%,#e6bc78 45%,#d8b070 70%,#a89878 70%,#a89878 95%,#e0b060 95%)"><div style="left:0;top:6px;width:694px;height:4px;background:#4a78a8;border:1px solid #111"></div><div style="left:0;top:10px;width:694px;height:4px;background:#4a78a8;border:1px solid #111"></div><div style="left:0;top:15px;width:694px;height:4px;background:#4a78a8;border:1px solid #111"></div><div style="left:0;top:24px;width:694px;height:4px;background:#4a78a8;border:1px solid #111"></div></div>
<div style="left:284px;top:397px;width:696px;height:57px;border:1px solid #3a3a3a;border-left:none;border-radius:0 3px 3px 0;overflow:hidden;background:linear-gradient(#ccd5da 0,#ccd5da 47%,#b8c4c8 47%,#b8c4c8 65%,#acb8bd 65%,#acb8bd 72%,#a8adb0 72%,#a8adb0 80%,#a3b3b8 80%)"><div style="left:0;top:46px;width:694px;height:5px;background:#505456;border:1px solid #111"></div></div>
<div style="left:283px;top:126px;width:1.3px;height:553px;background:#d4505c"></div>
<svg style="left:283px;top:127px" width="12" height="11" viewBox="0 0 12 11"><path d="M1 1.5 H9 L1 9.5Z" fill="#7a2a30"/><path d="M1 1.5 H9.5 L1.5 9.5" fill="none" stroke="#f0c010" stroke-width="1.3" stroke-dasharray="1.2 .6"/></svg>
<div style="left:0px;top:153px;width:189px;height:61px;background:#3d4b55"></div>
<div style="left:0px;top:213px;width:275px;height:1px;background:#1c1f22"></div>
<div style="left:189px;top:153px;width:1px;height:61px;background:#1c1f22"></div>
<div style="left:190px;top:153px;width:7px;height:60px;background:#53636e"></div>
<div style="left:197px;top:153px;width:18px;height:60px;background:#283846"></div>
<div style="left:215px;top:153px;width:1px;height:61px;background:#1c1f22"></div>
<div style="left:216px;top:153px;width:58px;height:60px;background:#293846"></div>
<div style="left:274px;top:153px;width:1px;height:61px;background:#1c1f22"></div>
<div style="left:1px;top:164px;width:140px;height:17px;background:#2b2b2b;border:1px solid #1a1a1a;border-radius:8px 0 0 8px;box-shadow:0 1px 0 #6a7680"></div>
<div style="left:119px;top:164px;width:22px;height:17px;background:linear-gradient(#2c2c2c 0,#2c2c2c 45%,#181818 45%);border-bottom:1px solid #3a3a3a"></div>
<span class="t" style="left:123.5px;top:167.6px;font-size:10px;color:#a4a4a4">I/O</span>
<div style="left:2px;top:165px;width:15px;height:15px;border-radius:50%;background:radial-gradient(circle,#7a2e2c 0,#7e3430 55%,#b0706a 72%,#6a2a28 100%);border:1px solid #1c1c1c"></div>
<span class="t" style="left:5.4px;top:164.8px;font-size:12.5px;color:#ecdcd0;font-weight:bold">a</span>
<div style="left:147px;top:164px;width:17px;height:17px;background:linear-gradient(#5a5f63 0,#575c60 50%,#4b555b 50%,#4a535a 100%);border:1px solid #1e2224;border-radius:2px"></div>
<span class="t" style="left:150px;top:167px;font-size:11px;color:#d0d0d0">M</span>
<div style="left:167px;top:164px;width:17px;height:17px;background:linear-gradient(#5a5f63 0,#575c60 50%,#4b555b 50%,#4a535a 100%);border:1px solid #1e2224;border-radius:2px"></div>
<span class="t" style="left:171px;top:167px;font-size:11px;color:#e4dccc">S</span>
<div style="left:28px;top:188px;width:112px;height:14px;background:#2c2d2e;border:1px solid #1a1b1c;border-radius:2px;box-shadow:0 1px 0 #56626b"></div>
<div style="left:41px;top:194px;width:86px;height:3px;background:#141414;border-radius:2px"></div>
<div style="left:87px;top:189px;width:25px;height:13px;background:linear-gradient(90deg,#dfe6ea 0,#f4f6f8 12%,#a6a8aa 14%,#a2a4a6 50%,#b0b2b4 76%,#dce4e8 78%,#f4f6f8 88%,#8a8c8e 90%,#7a7c7e 100%);box-shadow:0 2px 2px #1a2a33,inset 0 1px 0 #f0f4f6,inset 0 -1px 0 #e8ecee"></div>
<svg style="left:87px;top:189px" width="25" height="13" viewBox="0 0 25 13"><path d="M4 3 L10 6.5 L4 10Z" fill="#7a7c7e"/><path d="M14 3 L19 6.5 L14 10Z" fill="#8a8c8e"/><rect x="12" y="2" width="1.6" height="9" fill="#161616"/></svg>
<div style="left:147px;top:187px;width:37px;height:16px;background:#2a2a2a;border:1px solid #161616;border-radius:2px"></div>
<div style="left:149px;top:189px;width:16px;height:5px;background:repeating-linear-gradient(90deg,#141414 0,#141414 1px,#3c3c3c 1px,#3c3c3c 2px)"></div>
<div style="left:149px;top:196px;width:16px;height:5px;background:repeating-linear-gradient(90deg,#141414 0,#141414 1px,#3c3c3c 1px,#3c3c3c 2px)"></div>
<div style="left:148px;top:188px;width:31px;height:14px;overflow:hidden"><span class="t" style="left:10.6px;top:0.5px;font-size:11px;color:#f0f0f0;letter-spacing:-0.2px">-11.9</span></div>
<span class="t" style="left:197px;top:180px;width:18px;text-align:center;font-size:10px;color:#c8d4e0">2</span>
<div style="left:7px;top:214px;width:182px;height:61px;background:#3d4b55"></div>
<div style="left:7px;top:274px;width:268px;height:1px;background:#1c1f22"></div>
<div style="left:189px;top:214px;width:1px;height:61px;background:#1c1f22"></div>
<div style="left:190px;top:214px;width:7px;height:60px;background:#53636e"></div>
<div style="left:197px;top:214px;width:18px;height:60px;background:#283846"></div>
<div style="left:215px;top:214px;width:1px;height:61px;background:#1c1f22"></div>
<div style="left:216px;top:214px;width:58px;height:60px;background:#293846"></div>
<div style="left:274px;top:214px;width:1px;height:61px;background:#1c1f22"></div>
<div style="left:14px;top:225px;width:127px;height:17px;background:#2b2b2b;border:1px solid #1a1a1a;border-radius:8px 0 0 8px;box-shadow:0 1px 0 #6a7680"></div>
<div style="left:119px;top:225px;width:22px;height:17px;background:linear-gradient(#2c2c2c 0,#2c2c2c 45%,#181818 45%);border-bottom:1px solid #3a3a3a"></div>
<span class="t" style="left:123.5px;top:228.6px;font-size:10px;color:#a4a4a4">I/O</span>
<div style="left:15px;top:226px;width:15px;height:15px;border-radius:50%;background:radial-gradient(circle,#7a2e2c 0,#7e3430 55%,#b0706a 72%,#6a2a28 100%);border:1px solid #1c1c1c"></div>
<span class="t" style="left:18.4px;top:225.8px;font-size:12.5px;color:#ecdcd0;font-weight:bold">a</span>
<div style="left:147px;top:225px;width:17px;height:17px;background:linear-gradient(#5a5f63 0,#575c60 50%,#4b555b 50%,#4a535a 100%);border:1px solid #1e2224;border-radius:2px"></div>
<span class="t" style="left:150px;top:228px;font-size:11px;color:#d0d0d0">M</span>
<div style="left:167px;top:225px;width:17px;height:17px;background:linear-gradient(#5a5f63 0,#575c60 50%,#4b555b 50%,#4a535a 100%);border:1px solid #1e2224;border-radius:2px"></div>
<span class="t" style="left:171px;top:228px;font-size:11px;color:#e4dccc">S</span>
<div style="left:28px;top:249px;width:112px;height:14px;background:#2c2d2e;border:1px solid #1a1b1c;border-radius:2px;box-shadow:0 1px 0 #56626b"></div>
<div style="left:41px;top:255px;width:86px;height:3px;background:#141414;border-radius:2px"></div>
<div style="left:87px;top:250px;width:25px;height:13px;background:linear-gradient(90deg,#dfe6ea 0,#f4f6f8 12%,#a6a8aa 14%,#a2a4a6 50%,#b0b2b4 76%,#dce4e8 78%,#f4f6f8 88%,#8a8c8e 90%,#7a7c7e 100%);box-shadow:0 2px 2px #1a2a33,inset 0 1px 0 #f0f4f6,inset 0 -1px 0 #e8ecee"></div>
<svg style="left:87px;top:250px" width="25" height="13" viewBox="0 0 25 13"><path d="M4 3 L10 6.5 L4 10Z" fill="#7a7c7e"/><path d="M14 3 L19 6.5 L14 10Z" fill="#8a8c8e"/><rect x="12" y="2" width="1.6" height="9" fill="#161616"/></svg>
<div style="left:147px;top:248px;width:37px;height:16px;background:#2a2a2a;border:1px solid #161616;border-radius:2px"></div>
<div style="left:149px;top:250px;width:16px;height:5px;background:repeating-linear-gradient(90deg,#141414 0,#141414 1px,#3c3c3c 1px,#3c3c3c 2px)"></div>
<div style="left:149px;top:257px;width:16px;height:5px;background:repeating-linear-gradient(90deg,#141414 0,#141414 1px,#3c3c3c 1px,#3c3c3c 2px)"></div>
<div style="left:148px;top:249px;width:31px;height:14px;overflow:hidden"><span class="t" style="left:10.6px;top:0.5px;font-size:11px;color:#f0f0f0;letter-spacing:-0.2px">-11.9</span></div>
<span class="t" style="left:197px;top:241px;width:18px;text-align:center;font-size:10px;color:#c8d4e0">3</span>
<div style="left:7px;top:275px;width:182px;height:61px;background:#3d4b55"></div>
<div style="left:7px;top:335px;width:268px;height:1px;background:#1c1f22"></div>
<div style="left:189px;top:275px;width:1px;height:61px;background:#1c1f22"></div>
<div style="left:190px;top:275px;width:7px;height:60px;background:#53636e"></div>
<div style="left:197px;top:275px;width:18px;height:60px;background:#283846"></div>
<div style="left:215px;top:275px;width:1px;height:61px;background:#1c1f22"></div>
<div style="left:216px;top:275px;width:58px;height:60px;background:#293846"></div>
<div style="left:274px;top:275px;width:1px;height:61px;background:#1c1f22"></div>
<div style="left:14px;top:286px;width:127px;height:17px;background:#2b2b2b;border:1px solid #1a1a1a;border-radius:8px 0 0 8px;box-shadow:0 1px 0 #6a7680"></div>
<div style="left:119px;top:286px;width:22px;height:17px;background:linear-gradient(#2c2c2c 0,#2c2c2c 45%,#181818 45%);border-bottom:1px solid #3a3a3a"></div>
<span class="t" style="left:123.5px;top:289.6px;font-size:10px;color:#a4a4a4">I/O</span>
<div style="left:15px;top:287px;width:15px;height:15px;border-radius:50%;background:radial-gradient(circle,#7a2e2c 0,#7e3430 55%,#b0706a 72%,#6a2a28 100%);border:1px solid #1c1c1c"></div>
<span class="t" style="left:18.4px;top:286.8px;font-size:12.5px;color:#ecdcd0;font-weight:bold">a</span>
<span class="t" style="left:35px;top:289px;font-size:12px;color:#e6e6de;letter-spacing:-0.1px">Bass</span>
<div style="left:147px;top:286px;width:17px;height:17px;background:linear-gradient(#5a5f63 0,#575c60 50%,#4b555b 50%,#4a535a 100%);border:1px solid #1e2224;border-radius:2px"></div>
<span class="t" style="left:150px;top:289px;font-size:11px;color:#d0d0d0">M</span>
<div style="left:167px;top:286px;width:17px;height:17px;background:linear-gradient(#5a5f63 0,#575c60 50%,#4b555b 50%,#4a535a 100%);border:1px solid #1e2224;border-radius:2px"></div>
<span class="t" style="left:171px;top:289px;font-size:11px;color:#e4dccc">S</span>
<div style="left:28px;top:310px;width:112px;height:14px;background:#2c2d2e;border:1px solid #1a1b1c;border-radius:2px;box-shadow:0 1px 0 #56626b"></div>
<div style="left:41px;top:316px;width:86px;height:3px;background:#141414;border-radius:2px"></div>
<div style="left:87px;top:311px;width:25px;height:13px;background:linear-gradient(90deg,#dfe6ea 0,#f4f6f8 12%,#a6a8aa 14%,#a2a4a6 50%,#b0b2b4 76%,#dce4e8 78%,#f4f6f8 88%,#8a8c8e 90%,#7a7c7e 100%);box-shadow:0 2px 2px #1a2a33,inset 0 1px 0 #f0f4f6,inset 0 -1px 0 #e8ecee"></div>
<svg style="left:87px;top:311px" width="25" height="13" viewBox="0 0 25 13"><path d="M4 3 L10 6.5 L4 10Z" fill="#7a7c7e"/><path d="M14 3 L19 6.5 L14 10Z" fill="#8a8c8e"/><rect x="12" y="2" width="1.6" height="9" fill="#161616"/></svg>
<div style="left:147px;top:309px;width:37px;height:16px;background:#2a2a2a;border:1px solid #161616;border-radius:2px"></div>
<div style="left:149px;top:311px;width:16px;height:5px;background:repeating-linear-gradient(90deg,#141414 0,#141414 1px,#3c3c3c 1px,#3c3c3c 2px)"></div>
<div style="left:149px;top:318px;width:16px;height:5px;background:repeating-linear-gradient(90deg,#141414 0,#141414 1px,#3c3c3c 1px,#3c3c3c 2px)"></div>
<div style="left:148px;top:310px;width:31px;height:14px;overflow:hidden"><span class="t" style="left:16.3px;top:0.5px;font-size:11px;color:#f0f0f0;letter-spacing:-0.2px">-inf</span></div>
<span class="t" style="left:197px;top:302px;width:18px;text-align:center;font-size:10px;color:#c8d4e0">4</span>
<div style="left:7px;top:336px;width:182px;height:61px;background:#3d4b55"></div>
<div style="left:7px;top:396px;width:268px;height:1px;background:#1c1f22"></div>
<div style="left:189px;top:336px;width:1px;height:61px;background:#1c1f22"></div>
<div style="left:190px;top:336px;width:7px;height:60px;background:#53636e"></div>
<div style="left:197px;top:336px;width:18px;height:60px;background:#283846"></div>
<div style="left:215px;top:336px;width:1px;height:61px;background:#1c1f22"></div>
<div style="left:216px;top:336px;width:58px;height:60px;background:#293846"></div>
<div style="left:274px;top:336px;width:1px;height:61px;background:#1c1f22"></div>
<div style="left:14px;top:347px;width:127px;height:17px;background:#2b2b2b;border:1px solid #1a1a1a;border-radius:8px 0 0 8px;box-shadow:0 1px 0 #6a7680"></div>
<div style="left:119px;top:347px;width:22px;height:17px;background:linear-gradient(#2c2c2c 0,#2c2c2c 45%,#181818 45%);border-bottom:1px solid #3a3a3a"></div>
<span class="t" style="left:123.5px;top:350.6px;font-size:10px;color:#a4a4a4">I/O</span>
<div style="left:15px;top:348px;width:15px;height:15px;border-radius:50%;background:radial-gradient(circle,#7a2e2c 0,#7e3430 55%,#b0706a 72%,#6a2a28 100%);border:1px solid #1c1c1c"></div>
<span class="t" style="left:18.4px;top:347.8px;font-size:12.5px;color:#ecdcd0;font-weight:bold">a</span>
<span class="t" style="left:35px;top:350px;font-size:12px;color:#e6e6de;letter-spacing:-0.1px">MIDI 2</span>
<div style="left:147px;top:347px;width:17px;height:17px;background:linear-gradient(#5a5f63 0,#575c60 50%,#4b555b 50%,#4a535a 100%);border:1px solid #1e2224;border-radius:2px"></div>
<span class="t" style="left:150px;top:350px;font-size:11px;color:#d0d0d0">M</span>
<div style="left:167px;top:347px;width:17px;height:17px;background:linear-gradient(#5a5f63 0,#575c60 50%,#4b555b 50%,#4a535a 100%);border:1px solid #1e2224;border-radius:2px"></div>
<span class="t" style="left:171px;top:350px;font-size:11px;color:#e4dccc">S</span>
<div style="left:28px;top:371px;width:112px;height:14px;background:#2c2d2e;border:1px solid #1a1b1c;border-radius:2px;box-shadow:0 1px 0 #56626b"></div>
<div style="left:41px;top:377px;width:86px;height:3px;background:#141414;border-radius:2px"></div>
<div style="left:87px;top:372px;width:25px;height:13px;background:linear-gradient(90deg,#dfe6ea 0,#f4f6f8 12%,#a6a8aa 14%,#a2a4a6 50%,#b0b2b4 76%,#dce4e8 78%,#f4f6f8 88%,#8a8c8e 90%,#7a7c7e 100%);box-shadow:0 2px 2px #1a2a33,inset 0 1px 0 #f0f4f6,inset 0 -1px 0 #e8ecee"></div>
<svg style="left:87px;top:372px" width="25" height="13" viewBox="0 0 25 13"><path d="M4 3 L10 6.5 L4 10Z" fill="#7a7c7e"/><path d="M14 3 L19 6.5 L14 10Z" fill="#8a8c8e"/><rect x="12" y="2" width="1.6" height="9" fill="#161616"/></svg>
<div style="left:147px;top:370px;width:37px;height:16px;background:#2a2a2a;border:1px solid #161616;border-radius:2px"></div>
<div style="left:149px;top:372px;width:16px;height:5px;background:repeating-linear-gradient(90deg,#141414 0,#141414 1px,#3c3c3c 1px,#3c3c3c 2px)"></div>
<div style="left:149px;top:379px;width:16px;height:5px;background:repeating-linear-gradient(90deg,#141414 0,#141414 1px,#3c3c3c 1px,#3c3c3c 2px)"></div>
<div style="left:148px;top:371px;width:31px;height:14px;overflow:hidden"><span class="t" style="left:16.3px;top:0.5px;font-size:11px;color:#f0f0f0;letter-spacing:-0.2px">-inf</span></div>
<span class="t" style="left:197px;top:363px;width:18px;text-align:center;font-size:10px;color:#c8d4e0">5</span>
<div style="left:7px;top:397px;width:182px;height:61px;background:#3d4b55"></div>
<div style="left:7px;top:457px;width:268px;height:1px;background:#1c1f22"></div>
<div style="left:189px;top:397px;width:1px;height:61px;background:#1c1f22"></div>
<div style="left:190px;top:397px;width:7px;height:60px;background:#53636e"></div>
<div style="left:197px;top:397px;width:18px;height:60px;background:#283846"></div>
<div style="left:215px;top:397px;width:1px;height:61px;background:#1c1f22"></div>
<div style="left:216px;top:397px;width:58px;height:60px;background:#293846"></div>
<div style="left:274px;top:397px;width:1px;height:61px;background:#1c1f22"></div>
<div style="left:14px;top:408px;width:127px;height:17px;background:#2b2b2b;border:1px solid #1a1a1a;border-radius:8px 0 0 8px;box-shadow:0 1px 0 #6a7680"></div>
<div style="left:119px;top:408px;width:22px;height:17px;background:linear-gradient(#2c2c2c 0,#2c2c2c 45%,#181818 45%);border-bottom:1px solid #3a3a3a"></div>
<span class="t" style="left:123.5px;top:411.6px;font-size:10px;color:#a4a4a4">I/O</span>
<div style="left:15px;top:409px;width:15px;height:15px;border-radius:50%;background:radial-gradient(circle,#7a2e2c 0,#7e3430 55%,#b0706a 72%,#6a2a28 100%);border:1px solid #1c1c1c"></div>
<span class="t" style="left:18.4px;top:408.8px;font-size:12.5px;color:#ecdcd0;font-weight:bold">a</span>
<span class="t" style="left:35px;top:411px;font-size:12px;color:#e6e6de;letter-spacing:-0.1px">Str</span>
<div style="left:147px;top:408px;width:17px;height:17px;background:linear-gradient(#5a5f63 0,#575c60 50%,#4b555b 50%,#4a535a 100%);border:1px solid #1e2224;border-radius:2px"></div>
<span class="t" style="left:150px;top:411px;font-size:11px;color:#d0d0d0">M</span>
<div style="left:167px;top:408px;width:17px;height:17px;background:linear-gradient(#5a5f63 0,#575c60 50%,#4b555b 50%,#4a535a 100%);border:1px solid #1e2224;border-radius:2px"></div>
<span class="t" style="left:171px;top:411px;font-size:11px;color:#e4dccc">S</span>
<div style="left:28px;top:432px;width:112px;height:14px;background:#2c2d2e;border:1px solid #1a1b1c;border-radius:2px;box-shadow:0 1px 0 #56626b"></div>
<div style="left:41px;top:438px;width:86px;height:3px;background:#141414;border-radius:2px"></div>
<div style="left:87px;top:433px;width:25px;height:13px;background:linear-gradient(90deg,#dfe6ea 0,#f4f6f8 12%,#a6a8aa 14%,#a2a4a6 50%,#b0b2b4 76%,#dce4e8 78%,#f4f6f8 88%,#8a8c8e 90%,#7a7c7e 100%);box-shadow:0 2px 2px #1a2a33,inset 0 1px 0 #f0f4f6,inset 0 -1px 0 #e8ecee"></div>
<svg style="left:87px;top:433px" width="25" height="13" viewBox="0 0 25 13"><path d="M4 3 L10 6.5 L4 10Z" fill="#7a7c7e"/><path d="M14 3 L19 6.5 L14 10Z" fill="#8a8c8e"/><rect x="12" y="2" width="1.6" height="9" fill="#161616"/></svg>
<div style="left:147px;top:431px;width:37px;height:16px;background:#2a2a2a;border:1px solid #161616;border-radius:2px"></div>
<div style="left:149px;top:433px;width:16px;height:5px;background:repeating-linear-gradient(90deg,#141414 0,#141414 1px,#3c3c3c 1px,#3c3c3c 2px)"></div>
<div style="left:149px;top:440px;width:16px;height:5px;background:repeating-linear-gradient(90deg,#141414 0,#141414 1px,#3c3c3c 1px,#3c3c3c 2px)"></div>
<div style="left:148px;top:432px;width:31px;height:14px;overflow:hidden"><span class="t" style="left:16.3px;top:0.5px;font-size:11px;color:#f0f0f0;letter-spacing:-0.2px">-inf</span></div>
<span class="t" style="left:197px;top:424px;width:18px;text-align:center;font-size:10px;color:#c8d4e0">6</span>
<div style="left:7px;top:458px;width:182px;height:61px;background:#3d4b55"></div>
<div style="left:7px;top:518px;width:268px;height:1px;background:#1c1f22"></div>
<div style="left:189px;top:458px;width:1px;height:61px;background:#1c1f22"></div>
<div style="left:190px;top:458px;width:7px;height:60px;background:#53636e"></div>
<div style="left:197px;top:458px;width:18px;height:60px;background:#283846"></div>
<div style="left:215px;top:458px;width:1px;height:61px;background:#1c1f22"></div>
<div style="left:216px;top:458px;width:58px;height:60px;background:#293846"></div>
<div style="left:274px;top:458px;width:1px;height:61px;background:#1c1f22"></div>
<div style="left:14px;top:469px;width:127px;height:17px;background:#2b2b2b;border:1px solid #1a1a1a;border-radius:8px 0 0 8px;box-shadow:0 1px 0 #6a7680"></div>
<div style="left:119px;top:469px;width:22px;height:17px;background:linear-gradient(#2c2c2c 0,#2c2c2c 45%,#181818 45%);border-bottom:1px solid #3a3a3a"></div>
<span class="t" style="left:123.5px;top:472.6px;font-size:10px;color:#a4a4a4">I/O</span>
<div style="left:15px;top:470px;width:15px;height:15px;border-radius:50%;background:radial-gradient(circle,#7a2e2c 0,#7e3430 55%,#b0706a 72%,#6a2a28 100%);border:1px solid #1c1c1c"></div>
<span class="t" style="left:18.4px;top:469.8px;font-size:12.5px;color:#ecdcd0;font-weight:bold">a</span>
<span class="t" style="left:35px;top:472px;font-size:12px;color:#e6e6de;letter-spacing:-0.1px">MIDI 4</span>
<div style="left:147px;top:469px;width:17px;height:17px;background:linear-gradient(#5a5f63 0,#575c60 50%,#4b555b 50%,#4a535a 100%);border:1px solid #1e2224;border-radius:2px"></div>
<span class="t" style="left:150px;top:472px;font-size:11px;color:#d0d0d0">M</span>
<div style="left:167px;top:469px;width:17px;height:17px;background:linear-gradient(#5a5f63 0,#575c60 50%,#4b555b 50%,#4a535a 100%);border:1px solid #1e2224;border-radius:2px"></div>
<span class="t" style="left:171px;top:472px;font-size:11px;color:#e4dccc">S</span>
<div style="left:28px;top:493px;width:112px;height:14px;background:#2c2d2e;border:1px solid #1a1b1c;border-radius:2px;box-shadow:0 1px 0 #56626b"></div>
<div style="left:41px;top:499px;width:86px;height:3px;background:#141414;border-radius:2px"></div>
<div style="left:87px;top:494px;width:25px;height:13px;background:linear-gradient(90deg,#dfe6ea 0,#f4f6f8 12%,#a6a8aa 14%,#a2a4a6 50%,#b0b2b4 76%,#dce4e8 78%,#f4f6f8 88%,#8a8c8e 90%,#7a7c7e 100%);box-shadow:0 2px 2px #1a2a33,inset 0 1px 0 #f0f4f6,inset 0 -1px 0 #e8ecee"></div>
<svg style="left:87px;top:494px" width="25" height="13" viewBox="0 0 25 13"><path d="M4 3 L10 6.5 L4 10Z" fill="#7a7c7e"/><path d="M14 3 L19 6.5 L14 10Z" fill="#8a8c8e"/><rect x="12" y="2" width="1.6" height="9" fill="#161616"/></svg>
<div style="left:147px;top:492px;width:37px;height:16px;background:#2a2a2a;border:1px solid #161616;border-radius:2px"></div>
<div style="left:149px;top:494px;width:16px;height:5px;background:repeating-linear-gradient(90deg,#141414 0,#141414 1px,#3c3c3c 1px,#3c3c3c 2px)"></div>
<div style="left:149px;top:501px;width:16px;height:5px;background:repeating-linear-gradient(90deg,#141414 0,#141414 1px,#3c3c3c 1px,#3c3c3c 2px)"></div>
<div style="left:148px;top:493px;width:31px;height:14px;overflow:hidden"><span class="t" style="left:16.3px;top:0.5px;font-size:11px;color:#f0f0f0;letter-spacing:-0.2px">-inf</span></div>
<span class="t" style="left:197px;top:485px;width:18px;text-align:center;font-size:10px;color:#c8d4e0">7</span>
<div style="left:7px;top:519px;width:182px;height:61px;background:#3d4b55"></div>
<div style="left:7px;top:519px;width:182px;height:60px;background:#2f3031"></div>
<div style="left:7px;top:520px;width:143px;height:58px;background:#3c4a55;border-top:1px solid #b8c4cc;border-bottom:1px solid #b8c4cc"></div>
<div style="left:14px;top:522px;width:131px;height:54px;background:linear-gradient(90deg,#3a5266 0,#3a5266 12%,#3e6480 12%,#3e6480 30%,#4a7488 30%,#4a7488 50%,#3d6680 50%,#3d6680 68%,#4a7690 68%,#4a7690 82%,#3c627c 82%,#3c627c 92%,#37506a 92%)"></div>
<div style="left:7px;top:579px;width:268px;height:1px;background:#1c1f22"></div>
<div style="left:189px;top:519px;width:1px;height:61px;background:#1c1f22"></div>
<div style="left:190px;top:519px;width:7px;height:60px;background:#2aa5dc"></div>
<div style="left:197px;top:519px;width:18px;height:60px;background:#283846"></div>
<div style="left:215px;top:519px;width:1px;height:61px;background:#1c1f22"></div>
<div style="left:216px;top:519px;width:58px;height:60px;background:#293846"></div>
<div style="left:274px;top:519px;width:1px;height:61px;background:#1c1f22"></div>
<div style="left:14px;top:530px;width:127px;height:17px;background:#2b2b2b;border:1px solid #1a1a1a;border-radius:8px 0 0 8px;box-shadow:0 1px 0 #6a7680"></div>
<div style="left:119px;top:530px;width:22px;height:17px;background:linear-gradient(#2c2c2c 0,#2c2c2c 45%,#181818 45%);border-bottom:1px solid #3a3a3a"></div>
<span class="t" style="left:123.5px;top:533.6px;font-size:10px;color:#a4a4a4">I/O</span>
<div style="left:15px;top:531px;width:15px;height:15px;border-radius:50%;background:radial-gradient(circle,#d02020 0,#b81818 60%,#e05050 75%,#901010 100%);border:1px solid #1c1c1c"></div>
<span class="t" style="left:18.4px;top:530.8px;font-size:12.5px;color:#ecdcd0;font-weight:bold">a</span>
<span class="t" style="left:35px;top:533px;font-size:12px;color:#e6e6de;letter-spacing:-0.1px">Folder Kontakt</span>
<div style="left:147px;top:530px;width:17px;height:17px;background:linear-gradient(#5a5f63 0,#575c60 50%,#4b555b 50%,#4a535a 100%);border:1px solid #1e2224;border-radius:2px"></div>
<span class="t" style="left:150px;top:533px;font-size:11px;color:#d0d0d0">M</span>
<div style="left:167px;top:530px;width:17px;height:17px;background:linear-gradient(#5a5f63 0,#575c60 50%,#4b555b 50%,#4a535a 100%);border:1px solid #1e2224;border-radius:2px"></div>
<span class="t" style="left:171px;top:533px;font-size:11px;color:#e4dccc">S</span>
<div style="left:28px;top:554px;width:112px;height:14px;background:rgba(30,36,40,.6);border:1px solid #1a1b1c;border-radius:2px;box-shadow:0 1px 0 #56626b"></div>
<div style="left:41px;top:560px;width:86px;height:3px;background:#141414;border-radius:2px"></div>
<div style="left:87px;top:555px;width:25px;height:13px;background:linear-gradient(90deg,#dfe6ea 0,#f4f6f8 12%,#a6a8aa 14%,#a2a4a6 50%,#b0b2b4 76%,#dce4e8 78%,#f4f6f8 88%,#8a8c8e 90%,#7a7c7e 100%);box-shadow:0 2px 2px #1a2a33,inset 0 1px 0 #f0f4f6,inset 0 -1px 0 #e8ecee"></div>
<svg style="left:87px;top:555px" width="25" height="13" viewBox="0 0 25 13"><path d="M4 3 L10 6.5 L4 10Z" fill="#7a7c7e"/><path d="M14 3 L19 6.5 L14 10Z" fill="#8a8c8e"/><rect x="12" y="2" width="1.6" height="9" fill="#161616"/></svg>
<div style="left:147px;top:553px;width:37px;height:16px;background:#2a2a2a;border:1px solid #161616;border-radius:2px"></div>
<div style="left:149px;top:555px;width:16px;height:5px;background:repeating-linear-gradient(90deg,#141414 0,#141414 1px,#3c3c3c 1px,#3c3c3c 2px)"></div>
<div style="left:149px;top:562px;width:16px;height:5px;background:repeating-linear-gradient(90deg,#141414 0,#141414 1px,#3c3c3c 1px,#3c3c3c 2px)"></div>
<div style="left:148px;top:554px;width:31px;height:14px;overflow:hidden"><span class="t" style="left:10.6px;top:0.5px;font-size:11px;color:#f0f0f0;letter-spacing:-0.2px">-11.9</span></div>
<span class="t" style="left:197px;top:546px;width:18px;text-align:center;font-size:10px;color:#e05050">8</span>
<div style="left:197px;top:153px;width:18px;height:60px;background:#2b2b2c"></div>
<div style="left:201px;top:155px;width:11px;height:11px;border-radius:50%;background:#a2a4a6"></div>
<div style="left:197px;top:168px;width:18px;height:45px;background:#243442;border-radius:9px 9px 0 0;border-top:1.5px solid #161b20"></div>
<span class="t" style="left:197px;top:180px;width:18px;text-align:center;font-size:10px;color:#c8d4e0">2</span>
<svg style="left:201px;top:202px" width="11" height="9" viewBox="0 0 11 9"><path d="M0 1 H4 L5 2.5 H11 V9 H0Z" fill="#f0d040"/><path d="M0 3.5 H11" stroke="#e8c030" stroke-width=".6"/><path d="M1 8 L4 4" stroke="#e0c8a0" stroke-width="1"/></svg>
<svg style="left:216px;top:157px" width="58" height="52" viewBox="0 0 58 52"><path d="M2 3 H19 L23 8 H55 V49 H2Z" fill="#1c2a36"/><path d="M2.5 4 H18.5 L22.5 9 H54 V48.5 H2.5Z" fill="#33587a"/><rect x="2.5" y="35" width="51.5" height="6" fill="#3b4a55"/><rect x="2.5" y="41" width="51.5" height="7.5" fill="#2a3a48"/><defs><linearGradient id="kg" x1="0" y1="0" x2="0" y2="1"><stop offset="0" stop-color="#fff0c0"/><stop offset=".5" stop-color="#f0a020"/><stop offset="1" stop-color="#c07010"/></linearGradient></defs><text x="4" y="31" font-family="Liberation Sans" font-size="14.5" fill="url(#kg)" letter-spacing="-0.2">Kontakt</text></svg>
<svg style="left:216px;top:221px" width="55" height="45" viewBox="0 0 55 45"><rect width="55" height="45" fill="#262626"/><rect x="0" y="0" width="55" height="4" fill="#3a3a3a"/><rect x="2" y="1" width="10" height="1.5" fill="#888"/><rect x="24" y="1" width="16" height="1.5" fill="#777"/><rect x="1" y="6" width="17" height="38" fill="#1e1a1a"/><rect x="1.5" y="7" width="16" height="4" fill="#b8b0c8"/><rect x="3" y="8" width="5" height="2" fill="#e8e0f0"/><rect x="10" y="8" width="6" height="2" fill="#7090d0"/><rect x="1.5" y="12" width="16" height="5" fill="#2a1a28"/><rect x="4" y="13" width="4" height="2" fill="#6a2a6a"/><rect x="1.5" y="17" width="16" height="6" fill="#4a2a18"/><rect x="6" y="18" width="9" height="3" fill="#b06020"/><rect x="1.5" y="24" width="16" height="6" fill="#8a6040"/><rect x="2" y="25" width="7" height="3" fill="#e8c8a0"/><rect x="10" y="25" width="6" height="3" fill="#c04010"/><rect x="1.5" y="31" width="16" height="5" fill="#1a2040"/><rect x="2" y="32" width="9" height="2.5" fill="#90b0e0"/><rect x="1.5" y="36" width="16" height="4" fill="#8a4a20"/><rect x="1.5" y="40" width="16" height="2" fill="#3080c0"/><rect x="1.5" y="42" width="16" height="2" fill="#b86a30"/><rect x="19" y="5" width="35" height="40" fill="#cfc2a8"/><rect x="19.5" y="5.5" width="34" height="6" fill="#f2f2f0"/><rect x="21" y="7" width="20" height="3" fill="#3a3a3a"/><rect x="43" y="7" width="9" height="3" fill="#4a4a4a"/><rect x="45" y="7.5" width="3" height="2" fill="#e0c050"/><rect x="19.5" y="11.5" width="34" height="3" fill="#d8ccb0"/><rect x="32" y="12" width="6" height="1.5" fill="#e0a030"/><rect x="19.5" y="14.5" width="34" height="3" fill="#b09a80"/><rect x="19.5" y="17.5" width="34" height="5" fill="#585450"/><rect x="21" y="18.5" width="4" height="3" fill="#d8d0c0"/><rect x="27" y="18.5" width="24" height="3" fill="#464240"/><rect x="19.5" y="22.5" width="34" height="3" fill="#c0b098"/><rect x="19.5" y="25.5" width="34" height="4" fill="#a89888"/><rect x="28" y="26" width="10" height="2.5" fill="#6a5040"/><rect x="19.5" y="29.5" width="34" height="2" fill="#ece4d4"/><rect x="19.5" y="31.5" width="34" height="5" fill="#c8bca0"/><rect x="22" y="32" width="28" height="4" fill="#3e3e3e"/><g fill="#6a6a6a"><rect x="23" y="33" width="2" height="2"/><rect x="27" y="33" width="2" height="2"/><rect x="31" y="33" width="2" height="2"/><rect x="35" y="33" width="2" height="2"/><rect x="39" y="33" width="2" height="2"/><rect x="43" y="33" width="2" height="2"/></g><rect x="19.5" y="37" width="34" height="2" fill="#b8a890"/><rect x="19.5" y="39" width="34" height="2.5" fill="#f0e8d4"/><rect x="19.5" y="41.5" width="34" height="3.5" fill="#5a88c0"/><path d="M20 43.2 H54" stroke="#e0ecf8" stroke-dasharray="1.2 1.6" stroke-width="1.4"/></svg>
<svg style="left:216px;top:277px" width="58" height="56" viewBox="0 0 58 56"><path d="M22 36 L50 8" stroke="#f4c878" stroke-width="3.2"/><path d="M46 6 L53 1 L56 4 L50 11Z" fill="#f8d080"/><path d="M44 9 L50 3" stroke="#c0c8d0" stroke-width="1.2" stroke-dasharray="1 1.5"/><path d="M3 48 Q2 40 9 36 Q12 28 19 26 Q17 32 22 34 Q28 34 27 40 Q25 44 21 46 Q18 54 10 54 Q4 54 3 48Z" fill="#d88020"/><path d="M14 30 Q19 25 21 28 Q18 33 24 35 Q27 40 21 45 Q17 52 12 50 Q16 44 11 40Z" fill="#eeeeea"/><path d="M2 48 Q4 54 10 54" fill="none" stroke="#4a2008" stroke-width="1.5"/><rect x="10" y="42" width="4" height="4" fill="#d8e4e8" transform="rotate(45 12 44)"/></svg>
<svg style="left:216px;top:339px" width="58" height="54" viewBox="0 0 58 54"><path d="M19 20 L42 2 L48 3 L42 9 L53 14 L47 22 Z" fill="#c89058"/><path d="M24 19 L42 3 L40 18Z" fill="#a86a38"/><path d="M33 5 L45 26" stroke="#f0e0c8" stroke-width="1"/><path d="M6 23 H52 V33 H30 L28 37 H8 Q4 33 6 23Z" fill="#f0e2c4"/><rect x="5" y="28" width="20" height="4" fill="#fbf4e4"/><path d="M14 33 Q11 42 14 48 M23 35 Q21 42 24 49 M35 34 Q32 44 37 52 M48 33 Q46 40 50 45" fill="none" stroke="#e8d2a8" stroke-width="2.6"/><path d="M13 23 L17 18 L21 22" fill="#e0c8a0"/></svg>
<svg style="left:216px;top:401px" width="58" height="54" viewBox="0 0 58 54"><path d="M12 19.4 V4.450000000000003" stroke="#8a4a20" stroke-width=".9"/><circle cx="12" cy="4.450000000000003" r="1.4949999999999999" fill="#b05a20"/><ellipse cx="12" cy="24" rx="5.75" ry="5.175" fill="#9a4a1a"/><ellipse cx="12" cy="30.9" rx="6.324999999999999" ry="5.52" fill="#7a3410"/><ellipse cx="11" cy="23" rx="2.3" ry="2.3" fill="#d0803a" opacity=".55"/><path d="M19 26.6 V12.299999999999997" stroke="#8a4a20" stroke-width=".9"/><circle cx="19" cy="12.299999999999997" r="1.4300000000000002" fill="#b05a20"/><ellipse cx="19" cy="31" rx="5.5" ry="4.95" fill="#9a4a1a"/><ellipse cx="19" cy="37.6" rx="6.050000000000001" ry="5.28" fill="#7a3410"/><ellipse cx="18" cy="30" rx="2.2" ry="2.2" fill="#d0803a" opacity=".55"/><path d="M28 16.6 V2.299999999999997" stroke="#8a4a20" stroke-width=".9"/><circle cx="28" cy="2.299999999999997" r="1.4300000000000002" fill="#b05a20"/><ellipse cx="28" cy="21" rx="5.5" ry="4.95" fill="#9a4a1a"/><ellipse cx="28" cy="27.6" rx="6.050000000000001" ry="5.28" fill="#7a3410"/><ellipse cx="27" cy="20" rx="2.2" ry="2.2" fill="#d0803a" opacity=".55"/><path d="M30 29.4 V14.450000000000003" stroke="#8a4a20" stroke-width=".9"/><circle cx="30" cy="14.450000000000003" r="1.4949999999999999" fill="#b05a20"/><ellipse cx="30" cy="34" rx="5.75" ry="5.175" fill="#9a4a1a"/><ellipse cx="30" cy="40.9" rx="6.324999999999999" ry="5.52" fill="#7a3410"/><ellipse cx="29" cy="33" rx="2.3" ry="2.3" fill="#d0803a" opacity=".55"/><path d="M40 24 V11" stroke="#8a4a20" stroke-width=".9"/><circle cx="40" cy="11" r="1.3" fill="#b05a20"/><ellipse cx="40" cy="28" rx="5" ry="4.5" fill="#9a4a1a"/><ellipse cx="40" cy="34" rx="5.5" ry="4.8" fill="#7a3410"/><ellipse cx="39" cy="27" rx="2" ry="2" fill="#d0803a" opacity=".55"/><path d="M38 36 V23" stroke="#8a4a20" stroke-width=".9"/><circle cx="38" cy="23" r="1.3" fill="#b05a20"/><ellipse cx="38" cy="40" rx="5" ry="4.5" fill="#9a4a1a"/><ellipse cx="38" cy="46" rx="5.5" ry="4.8" fill="#7a3410"/><ellipse cx="37" cy="39" rx="2" ry="2" fill="#d0803a" opacity=".55"/><path d="M47 32.4 V20.7" stroke="#8a4a20" stroke-width=".9"/><circle cx="47" cy="20.7" r="1.1700000000000002" fill="#b05a20"/><ellipse cx="47" cy="36" rx="4.5" ry="4.05" fill="#9a4a1a"/><ellipse cx="47" cy="41.4" rx="4.95" ry="4.32" fill="#7a3410"/><ellipse cx="46" cy="35" rx="1.8" ry="1.8" fill="#d0803a" opacity=".55"/><path d="M52 39.8 V29.4" stroke="#8a4a20" stroke-width=".9"/><circle cx="52" cy="29.4" r="1.04" fill="#b05a20"/><ellipse cx="52" cy="43" rx="4.0" ry="3.6" fill="#9a4a1a"/><ellipse cx="52" cy="47.8" rx="4.4" ry="3.84" fill="#7a3410"/><ellipse cx="51" cy="42" rx="1.6" ry="1.6" fill="#d0803a" opacity=".55"/><path d="M30 42.4 V30.7" stroke="#8a4a20" stroke-width=".9"/><circle cx="30" cy="30.7" r="1.1700000000000002" fill="#b05a20"/><ellipse cx="30" cy="46" rx="4.5" ry="4.05" fill="#9a4a1a"/><ellipse cx="30" cy="51.4" rx="4.95" ry="4.32" fill="#7a3410"/><ellipse cx="29" cy="45" rx="1.8" ry="1.8" fill="#d0803a" opacity=".55"/></svg>
<div style="left:197px;top:519px;width:18px;height:60px;background:#2b2b2c"></div>
<div style="left:201px;top:521px;width:11px;height:11px;border-radius:50%;background:linear-gradient(#9a9c9e 0,#9a9c9e 50%,#5a5c5e 50%)"></div>
<div style="left:198px;top:535px;width:17px;height:44px;background:#566470;border-radius:8px 8px 0 0;border-top:1.5px solid #161b20"></div>
<span class="t" style="left:197px;top:546px;width:18px;text-align:center;font-size:10px;color:#e84848">8</span>
<svg style="left:201px;top:568px" width="11" height="9" viewBox="0 0 11 9"><path d="M0 1 H4 L5 2.5 H11 V9 H0Z" fill="#f0d040"/><path d="M0 3.5 H11" stroke="#e8c030" stroke-width=".6"/><path d="M1 8 L4 4" stroke="#e0c8a0" stroke-width="1"/></svg>
<div style="left:216px;top:519px;width:58px;height:60px;background:#3a4854"></div>
<svg style="left:216px;top:519px" width="58" height="60" viewBox="0 0 58 60"><rect x="2" y="2" width="54" height="56" fill="#2e3c48"/><rect x="48" y="2" width="8" height="54" fill="#3a4854"/><path d="M3 8 H19 L23 12 H54 V52 H3Z" fill="#33587a" stroke="#1c2a36" stroke-width="1"/><rect x="3.5" y="38" width="50" height="6" fill="#3b4a55"/><rect x="3.5" y="44" width="50" height="8" fill="#2a3a48"/><path d="M16 41 A14 14 0 1 1 41 24" fill="none" stroke="#3a2e26" stroke-width="5.5"/><path d="M20 43 Q28 36 30 28 Q31 22 36 17" fill="none" stroke="#3a2e26" stroke-width="3.5"/><path d="M21 42 Q28 36 29.5 28 Q31 22 35 18" fill="none" stroke="#6a4030" stroke-width="1"/><g stroke="#20c838" stroke-width="0.9"><path d="M25.5 35 V41 M28 32 V46 M30.5 29 V44 M33 33 V43 M35.5 28 V49 M38 31 V45 M40.5 27 V47 M43 32 V42 M45.5 34 V40 M48 36 V39"/></g></svg>
<svg style="left:0px;top:205px" width="8" height="9" viewBox="0 0 8 9"><path d="M0 0 L0 9 L8 9Z" fill="#2e2f31"/><path d="M0 1.5 L7 8.5" stroke="#e8d040" stroke-width="1" stroke-dasharray="1 1"/></svg>
<svg style="left:7px;top:566px" width="14" height="14" viewBox="0 0 14 14"><path d="M0 0 L0 14 L14 14Z" fill="#2e2f31"/><path d="M0 1 L13 13.5" stroke="#e8d040" stroke-width="1.1" stroke-dasharray="1 1"/></svg>
<div style="left:20px;top:580px;width:169px;height:24px;background:#3d4b55"></div>
<div style="left:20px;top:603px;width:255px;height:1px;background:#1c1f22"></div>
<div style="left:189px;top:580px;width:1px;height:24px;background:#1c1f22"></div>
<div style="left:190px;top:580px;width:7px;height:23px;background:#53636e"></div>
<div style="left:197px;top:580px;width:18px;height:23px;background:#283846"></div>
<div style="left:215px;top:580px;width:1px;height:24px;background:#1c1f22"></div>
<div style="left:216px;top:580px;width:58px;height:23px;background:#293846"></div>
<div style="left:274px;top:580px;width:1px;height:24px;background:#1c1f22"></div>
<div style="left:27px;top:583px;width:114px;height:16px;background:#2b2b2b;border:1px solid #1a1a1a;border-radius:8px 0 0 8px;box-shadow:0 1px 0 #6a7680"></div>
<div style="left:119px;top:583px;width:22px;height:16px;background:linear-gradient(#2c2c2c 0,#2c2c2c 45%,#181818 45%);border-bottom:1px solid #3a3a3a"></div>
<span class="t" style="left:123.5px;top:586.6px;font-size:10px;color:#a4a4a4">I/O</span>
<div style="left:28px;top:584px;width:15px;height:15px;border-radius:50%;background:radial-gradient(circle,#b86a66 0,#b86a66 13%,#5a2424 15%,#5a2424 26%,#d0aaa0 29%,#b08078 40%,#7a3a36 48%,#6a302c 82%,#1a1a1a 92%)"></div>
<span class="t" style="left:48px;top:586px;font-size:12px;color:#e6e6de;letter-spacing:-0.35px">Kt. st. 1</span>
<div style="left:147px;top:583px;width:17px;height:17px;background:linear-gradient(#5a5f63 0,#575c60 50%,#4b555b 50%,#4a535a 100%);border:1px solid #1e2224;border-radius:2px"></div>
<span class="t" style="left:150px;top:586px;font-size:11px;color:#d0d0d0">M</span>
<div style="left:167px;top:583px;width:17px;height:17px;background:linear-gradient(#5a5f63 0,#575c60 50%,#4b555b 50%,#4a535a 100%);border:1px solid #1e2224;border-radius:2px"></div>
<span class="t" style="left:171px;top:586px;font-size:11px;color:#e4dccc">S</span>
<span class="t" style="left:197px;top:588px;width:18px;text-align:center;font-size:10px;color:#c8d4e0">9</span>
<div style="left:20px;top:604px;width:169px;height:24px;background:#3d4b55"></div>
<div style="left:20px;top:627px;width:255px;height:1px;background:#1c1f22"></div>
<div style="left:189px;top:604px;width:1px;height:24px;background:#1c1f22"></div>
<div style="left:190px;top:604px;width:7px;height:23px;background:#53636e"></div>
<div style="left:197px;top:604px;width:18px;height:23px;background:#283846"></div>
<div style="left:215px;top:604px;width:1px;height:24px;background:#1c1f22"></div>
<div style="left:216px;top:604px;width:58px;height:23px;background:#293846"></div>
<div style="left:274px;top:604px;width:1px;height:24px;background:#1c1f22"></div>
<div style="left:27px;top:607px;width:114px;height:16px;background:#2b2b2b;border:1px solid #1a1a1a;border-radius:8px 0 0 8px;box-shadow:0 1px 0 #6a7680"></div>
<div style="left:119px;top:607px;width:22px;height:16px;background:linear-gradient(#2c2c2c 0,#2c2c2c 45%,#181818 45%);border-bottom:1px solid #3a3a3a"></div>
<span class="t" style="left:123.5px;top:610.6px;font-size:10px;color:#a4a4a4">I/O</span>
<div style="left:28px;top:608px;width:15px;height:15px;border-radius:50%;background:radial-gradient(circle,#b86a66 0,#b86a66 13%,#5a2424 15%,#5a2424 26%,#d0aaa0 29%,#b08078 40%,#7a3a36 48%,#6a302c 82%,#1a1a1a 92%)"></div>
<span class="t" style="left:48px;top:610px;font-size:12px;color:#e6e6de;letter-spacing:-0.35px">Kt. aux 1</span>
<div style="left:147px;top:607px;width:17px;height:17px;background:linear-gradient(#5a5f63 0,#575c60 50%,#4b555b 50%,#4a535a 100%);border:1px solid #1e2224;border-radius:2px"></div>
<span class="t" style="left:150px;top:610px;font-size:11px;color:#d0d0d0">M</span>
<div style="left:167px;top:607px;width:17px;height:17px;background:linear-gradient(#5a5f63 0,#575c60 50%,#4b555b 50%,#4a535a 100%);border:1px solid #1e2224;border-radius:2px"></div>
<span class="t" style="left:171px;top:610px;font-size:11px;color:#e4dccc">S</span>
<span class="t" style="left:197px;top:612px;width:18px;text-align:center;font-size:10px;color:#c8d4e0">10</span>
<div style="left:20px;top:628px;width:169px;height:24px;background:#3d4b55"></div>
<div style="left:20px;top:651px;width:255px;height:1px;background:#1c1f22"></div>
<div style="left:189px;top:628px;width:1px;height:24px;background:#1c1f22"></div>
<div style="left:190px;top:628px;width:7px;height:23px;background:#53636e"></div>
<div style="left:197px;top:628px;width:18px;height:23px;background:#283846"></div>
<div style="left:215px;top:628px;width:1px;height:24px;background:#1c1f22"></div>
<div style="left:216px;top:628px;width:58px;height:23px;background:#293846"></div>
<div style="left:274px;top:628px;width:1px;height:24px;background:#1c1f22"></div>
<div style="left:27px;top:631px;width:114px;height:16px;background:#2b2b2b;border:1px solid #1a1a1a;border-radius:8px 0 0 8px;box-shadow:0 1px 0 #6a7680"></div>
<div style="left:119px;top:631px;width:22px;height:16px;background:linear-gradient(#2c2c2c 0,#2c2c2c 45%,#181818 45%);border-bottom:1px solid #3a3a3a"></div>
<span class="t" style="left:123.5px;top:634.6px;font-size:10px;color:#a4a4a4">I/O</span>
<div style="left:28px;top:632px;width:15px;height:15px;border-radius:50%;background:radial-gradient(circle,#b86a66 0,#b86a66 13%,#5a2424 15%,#5a2424 26%,#d0aaa0 29%,#b08078 40%,#7a3a36 48%,#6a302c 82%,#1a1a1a 92%)"></div>
<span class="t" style="left:48px;top:634px;font-size:12px;color:#e6e6de;letter-spacing:-0.35px">audio Str</span>
<div style="left:147px;top:631px;width:17px;height:17px;background:linear-gradient(#5a5f63 0,#575c60 50%,#4b555b 50%,#4a535a 100%);border:1px solid #1e2224;border-radius:2px"></div>
<span class="t" style="left:150px;top:634px;font-size:11px;color:#d0d0d0">M</span>
<div style="left:167px;top:631px;width:17px;height:17px;background:linear-gradient(#5a5f63 0,#575c60 50%,#4b555b 50%,#4a535a 100%);border:1px solid #1e2224;border-radius:2px"></div>
<span class="t" style="left:171px;top:634px;font-size:11px;color:#e4dccc">S</span>
<span class="t" style="left:197px;top:636px;width:18px;text-align:center;font-size:10px;color:#c8d4e0">11</span>
<div style="left:20px;top:652px;width:169px;height:24px;background:#3d4b55"></div>
<div style="left:20px;top:675px;width:255px;height:1px;background:#1c1f22"></div>
<div style="left:189px;top:652px;width:1px;height:24px;background:#1c1f22"></div>
<div style="left:190px;top:652px;width:7px;height:23px;background:#53636e"></div>
<div style="left:197px;top:652px;width:18px;height:23px;background:#283846"></div>
<div style="left:215px;top:652px;width:1px;height:24px;background:#1c1f22"></div>
<div style="left:216px;top:652px;width:58px;height:23px;background:#293846"></div>
<div style="left:274px;top:652px;width:1px;height:24px;background:#1c1f22"></div>
<div style="left:27px;top:655px;width:114px;height:16px;background:#2b2b2b;border:1px solid #1a1a1a;border-radius:8px 0 0 8px;box-shadow:0 1px 0 #6a7680"></div>
<div style="left:119px;top:655px;width:22px;height:16px;background:linear-gradient(#2c2c2c 0,#2c2c2c 45%,#181818 45%);border-bottom:1px solid #3a3a3a"></div>
<span class="t" style="left:123.5px;top:658.6px;font-size:10px;color:#a4a4a4">I/O</span>
<div style="left:28px;top:656px;width:15px;height:15px;border-radius:50%;background:radial-gradient(circle,#b86a66 0,#b86a66 13%,#5a2424 15%,#5a2424 26%,#d0aaa0 29%,#b08078 40%,#7a3a36 48%,#6a302c 82%,#1a1a1a 92%)"></div>
<span class="t" style="left:48px;top:658px;font-size:12px;color:#e6e6de;letter-spacing:-0.35px">Kt. aux 3</span>
<div style="left:147px;top:655px;width:17px;height:17px;background:linear-gradient(#5a5f63 0,#575c60 50%,#4b555b 50%,#4a535a 100%);border:1px solid #1e2224;border-radius:2px"></div>
<span class="t" style="left:150px;top:658px;font-size:11px;color:#d0d0d0">M</span>
<div style="left:167px;top:655px;width:17px;height:17px;background:linear-gradient(#5a5f63 0,#575c60 50%,#4b555b 50%,#4a535a 100%);border:1px solid #1e2224;border-radius:2px"></div>
<span class="t" style="left:171px;top:658px;font-size:11px;color:#e4dccc">S</span>
<span class="t" style="left:197px;top:660px;width:18px;text-align:center;font-size:10px;color:#c8d4e0">12</span>
<div style="left:0;top:675px;width:7px;height:2px;background:#1e9ad8"></div>
<div style="left:112px;top:541px;width:2px;height:2px;background:#4a90e0"></div>
<svg style="left:255px;top:582px" width="19" height="17" viewBox="0 0 19 17"><path d="M5 13.5 A6 6 0 1 1 13.5 6" fill="none" stroke="#3c3222" stroke-width="3"/><path d="M5.5 14 Q9 12.5 9.5 9.5 Q10 7 12.5 5.5" fill="none" stroke="#3c3222" stroke-width="1.8"/><path d="M6.5 13 Q9 11 9.5 8.5" stroke="#7a5a30" stroke-width=".7" fill="none"/><path d="M8 10 V14 M10 9 V15 M12 10.5 V14 M14 9.5 V15" stroke="#2aa83a" stroke-width=".9"/><path d="M15 10 L18 12.5 L15 15Z" fill="#20d040"/></svg>
<svg style="left:255px;top:606px" width="19" height="17" viewBox="0 0 19 17"><path d="M5 13.5 A6 6 0 1 1 13.5 6" fill="none" stroke="#3c3222" stroke-width="3"/><path d="M5.5 14 Q9 12.5 9.5 9.5 Q10 7 12.5 5.5" fill="none" stroke="#3c3222" stroke-width="1.8"/><path d="M6.5 13 Q9 11 9.5 8.5" stroke="#7a5a30" stroke-width=".7" fill="none"/><path d="M8 10 V14 M10 9 V15 M12 10.5 V14 M14 9.5 V15" stroke="#2aa83a" stroke-width=".9"/><path d="M15 10 L18 12.5 L15 15Z" fill="#20d040"/></svg>
<svg style="left:255px;top:654px" width="19" height="17" viewBox="0 0 19 17"><path d="M5 13.5 A6 6 0 1 1 13.5 6" fill="none" stroke="#3c3222" stroke-width="3"/><path d="M5.5 14 Q9 12.5 9.5 9.5 Q10 7 12.5 5.5" fill="none" stroke="#3c3222" stroke-width="1.8"/><path d="M6.5 13 Q9 11 9.5 8.5" stroke="#7a5a30" stroke-width=".7" fill="none"/><path d="M8 10 V14 M10 9 V15 M12 10.5 V14 M14 9.5 V15" stroke="#2aa83a" stroke-width=".9"/><path d="M15 10 L18 12.5 L15 15Z" fill="#20d040"/></svg>
<svg style="left:254px;top:631px" width="20" height="18" viewBox="0 0 20 18"><ellipse cx="7" cy="11" rx="2.5" ry="3" fill="#a04a1a"/><ellipse cx="11" cy="12.5" rx="2.5" ry="3.5" fill="#b85a24"/><ellipse cx="14.5" cy="10" rx="2" ry="3" fill="#8a3a14"/><ellipse cx="9" cy="15" rx="2.5" ry="2" fill="#c86a30"/><ellipse cx="16" cy="14" rx="1.8" ry="2.5" fill="#a04a1a"/><path d="M8 8 V1 M12 9 V2 M14 6 V3" stroke="#8a4a20" stroke-width=".8"/></svg>
<div style="left:297.0px;top:216.0px;width:630.0px;height:329.0px;background:#3c4a53;border:1px solid #18707f"></div>
<div style="left:298.0px;top:217.0px;width:628.0px;height:25.0px;background:#0a6278"></div>
<svg style="left:300px;top:220px" width="18" height="18" viewBox="0 0 18 18"><path d="M2 8 Q3 3 9 3 Q16 3 16 8 Q16 13 8 17 Q2 13 2 8Z" fill="#b27a55"/><path d="M2 8 Q3 4.5 5 4 Q5 11 8 17 Q2 13 2 8Z" fill="#5fb842"/><path d="M5 4 Q8 3.5 8.5 5 Q7.5 11 8.5 16.5 L8 17 Q4.8 11 5 4Z" fill="#f2f2f2"/><path d="M6 2.3 Q13 1 16.5 7" fill="none" stroke="#2f95dc" stroke-width="1.6"/></svg>
<span class="t" style="left:322.7px;top:222.5px;font-size:13px;color:#f2f2f2;letter-spacing:-0.2px;letter-spacing:0.05px">Routing for track 6 "Str"</span>
<svg style="left:905px;top:223px" width="12" height="12" viewBox="0 0 12 12"><path d="M1 1 L11 11 M11 1 L1 11" stroke="#ffffff" stroke-width="1.1"/></svg>
<div style="left:302.0px;top:249.0px;width:13.5px;height:13.5px;background:#e8e8e8;border:1px solid #9a9a9a"></div>
<svg style="left:303px;top:250px" width="12" height="12" viewBox="0 0 12 12"><path d="M2 6 L4.8 9 L10 2.5" fill="none" stroke="#000" stroke-width="2"/></svg>
<span class="t" style="left:320.6px;top:250.5px;font-size:11px;color:#d3d8dc;letter-spacing:-0.2px;">Parent send (track 2)</span>
<span class="t" style="left:552.7px;top:251.2px;width:0;font-size:11px;color:#d3d8dc;letter-spacing:-0.2px;direction:rtl"><span style="position:static;unicode-bidi:bidi-override;direction:ltr">Parent channels:</span></span>
<span class="t" style="left:552.7px;top:278.6px;width:0;font-size:11px;color:#d3d8dc;letter-spacing:-0.2px;direction:rtl"><span style="position:static;unicode-bidi:bidi-override;direction:ltr">Track channels:</span></span>
<div style="left:558.8px;top:246.0px;width:47.2px;height:21.0px;background:#e4e4e4;border:1px solid #cfcfcf"></div>
<span class="t" style="left:562.8px;top:251.2px;font-size:11px;color:#000;letter-spacing:-0.2px;">1-2</span>
<svg style="left:591.0px;top:253.5px" width="11" height="7" viewBox="0 0 11 7"><path d="M0.5 0.8 L5.5 5.8 L10.5 0.8" fill="none" stroke="#333" stroke-width="1.1"/></svg>
<div style="left:558.8px;top:273.0px;width:47.2px;height:21.0px;background:#e4e4e4;border:1px solid #cfcfcf"></div>
<span class="t" style="left:562.8px;top:278.6px;font-size:11px;color:#000;letter-spacing:-0.2px;">2</span>
<svg style="left:591.0px;top:280.5px" width="11" height="7" viewBox="0 0 11 7"><path d="M0.5 0.8 L5.5 5.8 L10.5 0.8" fill="none" stroke="#333" stroke-width="1.1"/></svg>
<div style="left:302.6px;top:273.7px;width:34.7px;height:18.3px;background:#003a40;border:1px solid #d8d8d8"></div>
<span class="t" style="left:305.6px;top:277.9px;font-size:11px;color:#bcd6d8;letter-spacing:-0.2px;">127</span>
<div style="left:304.6px;top:298.4px;width:198.8px;height:18.2px;background:#3a4750;border:1px solid #252b30;border-radius:3px;box-shadow:0 1px 0 #59656d"></div>
<div style="left:470.0px;top:299.4px;width:32.4px;height:16.2px;background:#2b3945;border-radius:0 2px 2px 0"></div>
<div style="left:322.0px;top:305.0px;width:165.4px;height:5.0px;background:#161616;border-radius:2px"></div>
<div style="left:428.0px;top:299.9px;width:24.8px;height:14.2px;background:linear-gradient(90deg,#dfe6ea 0,#f4f6f8 12%,#a6a8aa 14%,#a2a4a6 50%,#b0b2b4 76%,#dce4e8 78%,#f4f6f8 88%,#8a8c8e 90%,#7a7c7e 100%);box-shadow:0 2px 2px rgba(0,0,0,.45),inset 0 1px 0 #f0f4f6,inset 0 -1px 0 #e8ecee"></div>
<svg style="left:428px;top:300px" width="25" height="15" viewBox="0 0 25 15"><path d="M4.0 3.1 L9.9 7.1 L4.0 11.1Z" fill="#7a7c7e"/><path d="M13.9 3.1 L18.8 7.1 L13.9 11.1Z" fill="#8a8c8e"/><rect x="11.9" y="2" width="1.6" height="10.2" fill="#161616"/></svg>
<div style="left:508.0px;top:298.4px;width:97.2px;height:18.2px;background:#3a4750;border:1px solid #252b30;border-radius:3px;box-shadow:0 1px 0 #59656d"></div>
<div style="left:567.0px;top:299.4px;width:37.2px;height:16.2px;background:#2b3945;border-radius:0 2px 2px 0"></div>
<div style="left:517.8px;top:305.0px;width:78.2px;height:5.0px;background:#161616;border-radius:2px"></div>
<div style="left:552.0px;top:299.9px;width:9.0px;height:14.2px;background:linear-gradient(90deg,#f0f0f0 0,#e0e0e0 30%,#d0d0d0 70%,#c0c0c0 100%);border:1px solid #d8d8d8;box-shadow:0 2px 2px rgba(0,0,0,.45)"></div>
<div style="left:555.0px;top:301.4px;width:1.0px;height:11.2px;background:#222"></div>
<div style="left:557.5px;top:301.4px;width:1.0px;height:11.2px;background:#444"></div>
<span class="t" style="left:353.5px;top:325.5px;font-size:11px;color:#d3d8dc;letter-spacing:-0.2px;">Pan:</span>
<div style="left:379.8px;top:320.4px;width:40.3px;height:19.0px;background:#003a40;border:1px solid #d8d8d8"></div>
<span class="t" style="left:382.8px;top:325.5px;font-size:11px;color:#bcd6d8;letter-spacing:-0.2px;">center</span>
<span class="t" style="left:428.5px;top:325.5px;font-size:11px;color:#d3d8dc;letter-spacing:-0.2px;">Width:</span>
<div style="left:463.8px;top:321.2px;width:40.3px;height:18.2px;background:#003a40;border:1px solid #d8d8d8"></div>
<span class="t" style="left:466.8px;top:325.5px;font-size:11px;color:#bcd6d8;letter-spacing:-0.2px;">100%</span>
<div style="left:508.0px;top:321.2px;width:97.2px;height:18.2px;background:#3a4750;border:1px solid #252b30;border-radius:3px;box-shadow:0 1px 0 #59656d"></div>
<div style="left:567.0px;top:322.2px;width:37.2px;height:16.2px;background:#2b3945;border-radius:0 2px 2px 0"></div>
<div style="left:517.8px;top:327.8px;width:78.2px;height:5.0px;background:#161616;border-radius:2px"></div>
<div style="left:593.8px;top:322.7px;width:9.4px;height:14.2px;background:linear-gradient(90deg,#f0f0f0 0,#e0e0e0 30%,#d0d0d0 70%,#c0c0c0 100%);border:1px solid #d8d8d8;box-shadow:0 2px 2px rgba(0,0,0,.45)"></div>
<div style="left:597.0px;top:324.2px;width:1.0px;height:11.2px;background:#222"></div>
<div style="left:599.5px;top:324.2px;width:1.0px;height:11.2px;background:#444"></div>
<div style="left:556.0px;top:322.0px;width:1.0px;height:16.5px;background:#161616"></div>
<span class="t" style="left:431.5px;top:355.5px;font-size:11px;color:#d3d8dc;letter-spacing:-0.2px;">-&nbsp;&nbsp;Sends&nbsp;&nbsp;-</span>
<div style="left:302.3px;top:372.4px;width:305.7px;height:20.6px;background:#e4e4e4;border:1px solid #cfcfcf"></div>
<span class="t" style="left:306.3px;top:377.0px;font-size:11px;color:#000;letter-spacing:-0.2px;">Add new send...</span>
<svg style="left:593.0px;top:379.7px" width="11" height="7" viewBox="0 0 11 7"><path d="M0.5 0.8 L5.5 5.8 L10.5 0.8" fill="none" stroke="#333" stroke-width="1.1"/></svg>
<div style="left:302.0px;top:396.0px;width:307.0px;height:92.3px;background:#4b5963;border:1px solid #2e3a42;border-top-color:#5b6973"></div>
<span class="t" style="left:304.3px;top:399.4px;font-size:11px;color:#d3d8dc;letter-spacing:-0.2px;letter-spacing:0.02px">Send to track 3 "" (8 ch)</span>
<div style="left:557.8px;top:399.1px;width:49.2px;height:17.9px;background:#e2e2e2;border:1px solid #adadad"></div>
<span class="t" style="left:568.0px;top:402.2px;font-size:11px;color:#101020;letter-spacing:-0.2px;">Delete</span>
<div style="left:305.8px;top:420.4px;width:34.2px;height:17.7px;background:#003a40;border:1px solid #d8d8d8"></div>
<span class="t" style="left:308.8px;top:424.2px;font-size:11px;color:#bcd6d8;letter-spacing:-0.2px;">+0.00</span>
<div style="left:346.7px;top:420.4px;width:40.3px;height:17.7px;background:#003a40;border:1px solid #d8d8d8"></div>
<span class="t" style="left:349.7px;top:424.2px;font-size:11px;color:#bcd6d8;letter-spacing:-0.2px;">center</span>
<div style="left:403.8px;top:422.2px;width:16.3px;height:15.6px;background:linear-gradient(#b4b8bb,#9fa4a7);border:1px solid #6d7378"></div>
<div style="left:423.9px;top:422.2px;width:16.3px;height:15.6px;background:linear-gradient(#b4b8bb,#9fa4a7);border:1px solid #6d7378"></div>
<div style="left:443.7px;top:422.2px;width:16.3px;height:15.6px;background:linear-gradient(#b4b8bb,#9fa4a7);border:1px solid #6d7378"></div>
<span class="t" style="left:407.5px;top:424.2px;font-size:11px;color:#444;letter-spacing:-0.2px;">M</span>
<span class="t" style="left:427.5px;top:424.2px;font-size:11px;color:#555;letter-spacing:-0.2px;">&#216;</span>
<svg style="left:446px;top:425px" width="12" height="10" viewBox="0 0 12 10"><path d="M0 0 L5 5 L0 10Z M12 0 L7 5 L12 10Z" fill="#3a3a3a"/><rect x="0" y="3.5" width="12" height="3" fill="#3a3a3a"/></svg>
<div style="left:463.8px;top:420.4px;width:143.7px;height:19.0px;background:#4c5a64;border:1px solid #2c363c;border-top-color:#6b5f55"></div>
<div style="left:587.2px;top:421.0px;width:1.0px;height:18.0px;background:#2c363c"></div>
<span class="t" style="left:466.9px;top:424.4px;font-size:11px;color:#d3d8dc;letter-spacing:-0.2px;">Post-Fader (Post-Pan)</span>
<svg style="left:592.0px;top:427.0px" width="11" height="7" viewBox="0 0 11 7"><path d="M0.5 0.8 L5.5 5.8 L10.5 0.8" fill="none" stroke="#b8c0c4" stroke-width="1.1"/></svg>
<div style="left:307.3px;top:443.0px;width:180.9px;height:18.3px;background:#454749;border:1px solid #252b30;border-radius:3px;box-shadow:0 1px 0 #59656d"></div>
<div style="left:325.0px;top:449.6px;width:146.0px;height:5.0px;background:#161616;border-radius:2px"></div>
<div style="left:417.8px;top:444.5px;width:25.4px;height:14.3px;background:linear-gradient(90deg,#dfe6ea 0,#f4f6f8 12%,#a6a8aa 14%,#a2a4a6 50%,#b0b2b4 76%,#dce4e8 78%,#f4f6f8 88%,#8a8c8e 90%,#7a7c7e 100%);box-shadow:0 2px 2px rgba(0,0,0,.45),inset 0 1px 0 #f0f4f6,inset 0 -1px 0 #e8ecee"></div>
<svg style="left:418px;top:444px" width="26" height="15" viewBox="0 0 26 15"><path d="M4.1 3.1 L10.2 7.2 L4.1 11.2Z" fill="#7a7c7e"/><path d="M14.2 3.1 L19.3 7.2 L14.2 11.2Z" fill="#8a8c8e"/><rect x="12.2" y="2" width="1.6" height="10.3" fill="#161616"/></svg>
<div style="left:493.5px;top:442.7px;width:71.7px;height:18.6px;background:#454749;border:1px solid #252b30;border-radius:3px;box-shadow:0 1px 0 #59656d"></div>
<div style="left:503.0px;top:449.5px;width:48.0px;height:5.0px;background:#161616;border-radius:2px"></div>
<div style="left:524.6px;top:444.2px;width:9.6px;height:14.6px;background:linear-gradient(90deg,#f0f0f0 0,#e0e0e0 30%,#d0d0d0 70%,#c0c0c0 100%);border:1px solid #d8d8d8;box-shadow:0 2px 2px rgba(0,0,0,.45)"></div>
<div style="left:527.9px;top:445.7px;width:1.0px;height:11.6px;background:#222"></div>
<div style="left:530.4px;top:445.7px;width:1.0px;height:11.6px;background:#444"></div>
<div style="left:569.8px;top:444.3px;width:16.4px;height:15.5px;background:linear-gradient(#b0b4b7,#9da2a5);border:1px solid #6d7378"></div>
<svg style="left:571px;top:445px" width="14" height="14" viewBox="0 0 14 14"><circle cx="7" cy="7" r="6" fill="#5a5e61"/><circle cx="4" cy="6" r="1" fill="#9a9ea1"/><circle cx="10" cy="6" r="1" fill="#9a9ea1"/><circle cx="7" cy="4" r="1" fill="#9a9ea1"/><circle cx="7" cy="9" r="1" fill="#9a9ea1"/></svg>
<div style="left:590.0px;top:444.3px;width:16.0px;height:15.5px;background:linear-gradient(#b0b4b7,#9da2a5);border:1px solid #6d7378"></div>
<svg style="left:591px;top:445px" width="14" height="14" viewBox="0 0 14 14"><path d="M2 5 L6 1 L10 5" fill="none" stroke="#444" stroke-width="1.2"/><text x="5" y="13" font-size="7" font-family="Liberation Sans" fill="#444" font-weight="bold">TR</text></svg>
<span class="t" style="left:310.4px;top:469.0px;font-size:11px;color:#d3d8dc;letter-spacing:-0.2px;">Audio:</span>
<div style="left:342.1px;top:466.1px;width:47.6px;height:16.5px;background:#4c5a64;border:1px solid #2c363c"></div>
<div style="left:372.5px;top:467.0px;width:1.0px;height:15.0px;background:#2c363c"></div>
<span class="t" style="left:344.5px;top:469.0px;font-size:11px;color:#d3d8dc;letter-spacing:-0.2px;">None</span>
<svg style="left:376.5px;top:472.0px" width="11" height="7" viewBox="0 0 11 7"><path d="M0.5 0.8 L5.5 5.8 L10.5 0.8" fill="none" stroke="#b8c0c4" stroke-width="1.1"/></svg>
<span class="t" style="left:472.2px;top:469.5px;font-size:11px;color:#d3d8dc;letter-spacing:-0.2px;">MIDI:</span>
<div style="left:501.0px;top:466.1px;width:47.6px;height:16.5px;background:#4c5a64;border:1px solid #2c363c"></div>
<div style="left:531.3px;top:467.0px;width:1.0px;height:15.0px;background:#2c363c"></div>
<span class="t" style="left:503.0px;top:469.5px;font-size:11px;color:#d3d8dc;letter-spacing:-0.2px;">All</span>
<svg style="left:535.0px;top:472.0px" width="11" height="7" viewBox="0 0 11 7"><path d="M0.5 0.8 L5.5 5.8 L10.5 0.8" fill="none" stroke="#b8c0c4" stroke-width="1.1"/></svg>
<svg style="left:551px;top:469px" width="11" height="9" viewBox="0 0 11 9"><path d="M0 3.2 H6 V0.5 L10.5 4.5 L6 8.5 V5.8 H0Z" fill="#d8dde0"/></svg>
<div style="left:567.2px;top:466.1px;width:40.3px;height:16.5px;background:#4c5a64;border:1px solid #2c363c"></div>
<div style="left:590.2px;top:467.0px;width:1.0px;height:15.0px;background:#2c363c"></div>
<span class="t" style="left:569.5px;top:469.5px;font-size:11px;color:#c8d4e4;letter-spacing:-0.2px;">3</span>
<svg style="left:594px;top:464px" width="13" height="19" viewBox="0 0 13 19"><path d="M0.5 0.5 L0.5 15.5 L4 12 L6.5 18 L9 17 L6.5 11 L11.5 11 Z" fill="#ffffff" stroke="#000" stroke-width="1"/></svg>
<span class="t" style="left:388.0px;top:499.3px;font-size:11px;color:#d3d8dc;letter-spacing:-0.2px;">-&nbsp;&nbsp;Audio Hardware Outputs&nbsp;&nbsp;-</span>
<div style="left:302.0px;top:516.3px;width:306.0px;height:20.7px;background:#e4e4e4;border:1px solid #cfcfcf"></div>
<span class="t" style="left:306.0px;top:521.7px;font-size:11px;color:#000;letter-spacing:-0.2px;">Add new hardware output...</span>
<svg style="left:593.0px;top:523.6px" width="11" height="7" viewBox="0 0 11 7"><path d="M0.5 0.8 L5.5 5.8 L10.5 0.8" fill="none" stroke="#333" stroke-width="1.1"/></svg>
<span class="t" style="left:705.8px;top:247.1px;font-size:11px;color:#d3d8dc;letter-spacing:-0.2px;">-&nbsp;&nbsp;MIDI Hardware Output&nbsp;&nbsp;-</span>
<div style="left:616.0px;top:264.0px;width:306.0px;height:20.8px;background:#e4e4e4;border:1px solid #cfcfcf"></div>
<span class="t" style="left:620.0px;top:269.5px;font-size:11px;color:#000;letter-spacing:-0.2px;">&lt;no output&gt;</span>
<svg style="left:907.0px;top:271.4px" width="11" height="7" viewBox="0 0 11 7"><path d="M0.5 0.8 L5.5 5.8 L10.5 0.8" fill="none" stroke="#333" stroke-width="1.1"/></svg>
<div style="left:616.0px;top:288.0px;width:306.0px;height:20.6px;background:#e4e4e4;border:1px solid #cfcfcf"></div>
<span class="t" style="left:620.0px;top:293.6px;font-size:11px;color:#000;letter-spacing:-0.2px;">Send to original channels</span>
<svg style="left:907.0px;top:295.3px" width="11" height="7" viewBox="0 0 11 7"><path d="M0.5 0.8 L5.5 5.8 L10.5 0.8" fill="none" stroke="#333" stroke-width="1.1"/></svg>
<span class="t" style="left:738.5px;top:325.5px;font-size:11px;color:#d3d8dc;letter-spacing:-0.2px;">-&nbsp;&nbsp;Receives&nbsp;&nbsp;-</span>
<div style="left:616.0px;top:342.4px;width:306.0px;height:20.1px;background:#e4e4e4;border:1px solid #cfcfcf"></div>
<span class="t" style="left:620.0px;top:347.1px;font-size:11px;color:#000;letter-spacing:-0.2px;">Add new receive...</span>
<svg style="left:907.0px;top:349.4px" width="11" height="7" viewBox="0 0 11 7"><path d="M0.5 0.8 L5.5 5.8 L10.5 0.8" fill="none" stroke="#333" stroke-width="1.1"/></svg>
</body></html>
